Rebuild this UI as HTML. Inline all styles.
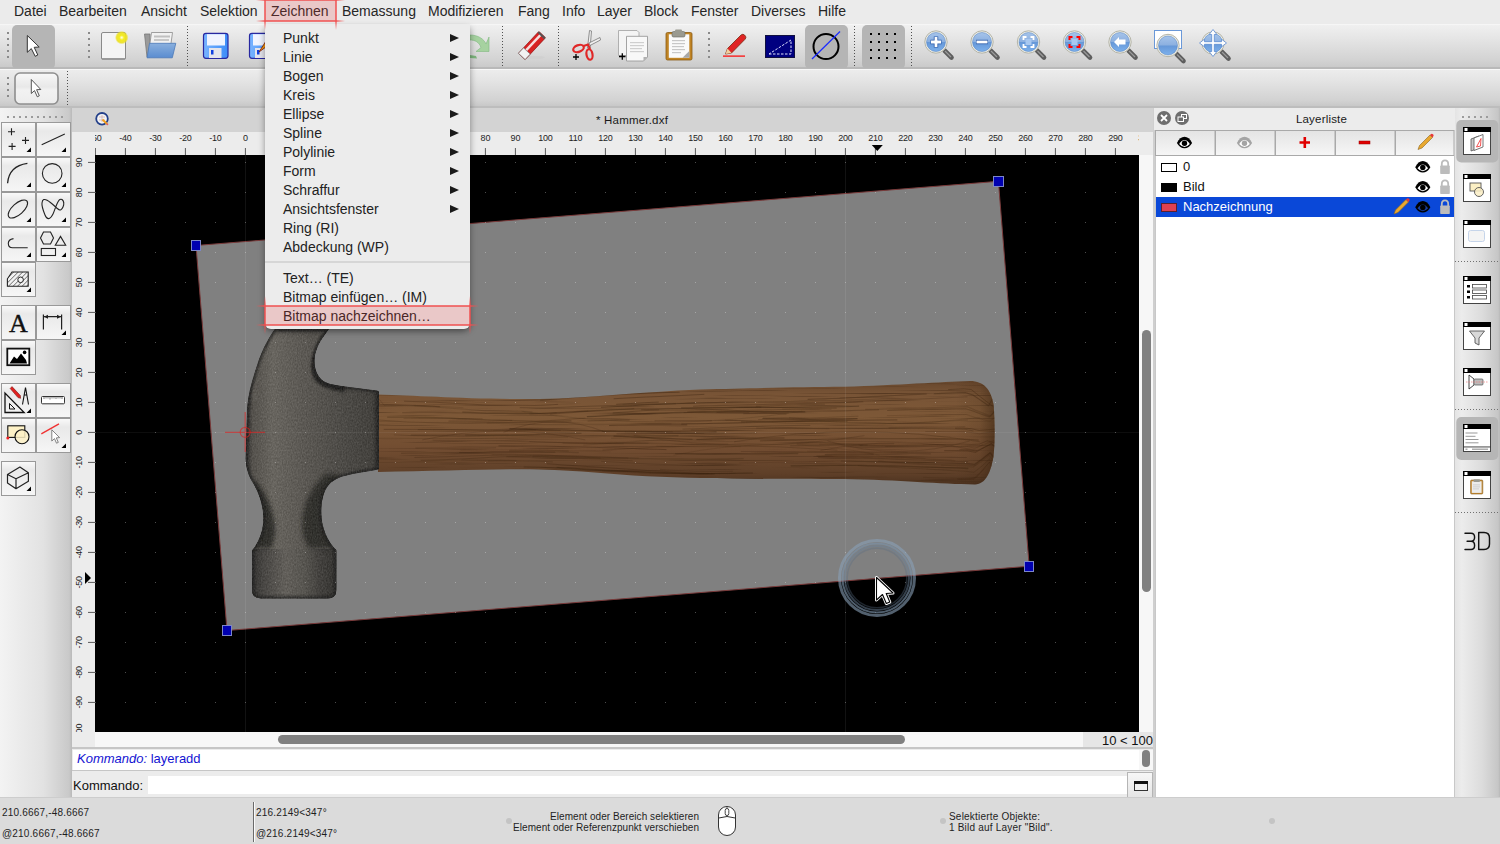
<!DOCTYPE html>
<html><head><meta charset="utf-8">
<style>
*{box-sizing:border-box}
html,body{margin:0;padding:0}
body{width:1500px;height:844px;position:relative;overflow:hidden;background:#ececec;font-family:"Liberation Sans",sans-serif;color:#222}
.a{position:absolute}
.mb{left:0;top:0;width:1500px;height:24px;background:#ebebeb}
.mi{position:absolute;top:2px;font-size:14px;line-height:18px;color:#262626;white-space:nowrap}
.tb1{left:0;top:24px;width:1500px;height:45px;background:linear-gradient(#f0f0f0 0,#e6e6e6 30%,#d2d2d2 85%,#cacaca 100%);border-top:1px solid #f6f6f6;border-bottom:2px solid #b9b9b9}
.tb2{left:0;top:69px;width:1500px;height:39px;background:linear-gradient(#ececec 0,#e4e4e4 30%,#d2d2d2 85%,#c8c8c8 100%);border-top:1px solid #f8f8f8;border-bottom:2px solid #bdbdbd}
.vdots{position:absolute;width:2px;background-image:linear-gradient(#6a6a6a 50%,transparent 50%);background-size:2px 4px}
.vdots2{position:absolute;width:1px;background-image:linear-gradient(#555 50%,transparent 50%);background-size:1px 3px}
.hdots{position:absolute;height:2px;background-image:linear-gradient(90deg,#9a9a9a 50%,transparent 50%);background-size:6px 2px}
.lp{left:0;top:108px;width:72px;height:690px;background:linear-gradient(90deg,#f3f3f3 0,#e2e2e2 60%,#c9c9c9 96%,#b9b9b9 100%)}
.tbtn{position:absolute;width:35px;height:35px;border:1px solid #9d9d9d;background:linear-gradient(#fbfbfb,#e9e9e9 45%,#f4f4f4)}
.rl{font-size:10px;color:#222;position:absolute;white-space:nowrap}
.st{position:absolute;font-size:10px;line-height:12px;letter-spacing:0.2px;color:#1e1e1e;white-space:nowrap}
.menu{left:265px;top:24px;width:205px;height:305px;background:#ececec;border-radius:0 0 6px 6px;box-shadow:2px 3px 6px -1px rgba(0,0,0,.25),-2px 3px 6px -1px rgba(0,0,0,.25)}
.it{position:absolute;left:18px;font-size:14px;line-height:18px;color:#222;white-space:nowrap}
.arr{position:absolute;left:185px;width:0;height:0;border-left:9px solid #1a1a1a;border-top:4.5px solid transparent;border-bottom:4.5px solid transparent}
.sb{position:absolute;left:1463px;width:28px;height:28px;background:#fff;border:1px solid #555;border-top:5px solid #000}
.sb:before{content:"";position:absolute;left:1px;top:-4px;width:4px;height:3px;background:#fff}
</style></head><body>

<!-- MENU BAR -->
<div class="a mb">
<span class="mi" style="left:14px">Datei</span>
<span class="mi" style="left:59px">Bearbeiten</span>
<span class="mi" style="left:141px">Ansicht</span>
<span class="mi" style="left:200px">Selektion</span>
<span class="mi" style="left:271px">Zeichnen</span>
<span class="mi" style="left:342px">Bemassung</span>
<span class="mi" style="left:428px">Modifizieren</span>
<span class="mi" style="left:518px">Fang</span>
<span class="mi" style="left:562px">Info</span>
<span class="mi" style="left:597px">Layer</span>
<span class="mi" style="left:644px">Block</span>
<span class="mi" style="left:691px">Fenster</span>
<span class="mi" style="left:751px">Diverses</span>
<span class="mi" style="left:818px">Hilfe</span>
</div>

<!-- TOOLBAR 1 -->
<div class="a tb1"></div>
<div class="a tb2"></div>
<!-- TOOLBAR1 ICONS -->
<svg class="a" style="left:0;top:24px" width="1500" height="44" viewBox="0 24 1500 44">
<defs>
<pattern id="vd" x="0" y="26" width="1" height="3" patternUnits="userSpaceOnUse"><rect width="1" height="1" fill="#505050"/></pattern>
<radialGradient id="glow" cx="0.5" cy="0.5" r="0.5"><stop offset="0" stop-color="#fffff0"/><stop offset="0.35" stop-color="#f4ec20"/><stop offset="0.75" stop-color="#ece020" stop-opacity="0.9"/><stop offset="1" stop-color="#ece020" stop-opacity="0"/></radialGradient>
<linearGradient id="blueF" x1="0" y1="0" x2="0" y2="1"><stop offset="0" stop-color="#8ab0de"/><stop offset="1" stop-color="#5a8cd0"/></linearGradient>
<linearGradient id="flop" x1="0" y1="0" x2="1" y2="0"><stop offset="0" stop-color="#78b4ff"/><stop offset="1" stop-color="#3c8cf8"/></linearGradient>
<linearGradient id="lens" x1="0" y1="0" x2="0" y2="1"><stop offset="0" stop-color="#a6c4ea"/><stop offset="0.48" stop-color="#8cb0e0"/><stop offset="0.52" stop-color="#6698d8"/><stop offset="1" stop-color="#7cb0ec"/></linearGradient>
<g id="zh"><path d="M8.5 8.5 L15.5 15.5" stroke="#5e5e5e" stroke-width="4.6" stroke-linecap="round"/><path d="M9 9 L15 15" stroke="#9a9a9a" stroke-width="1.2"/><circle cx="0" cy="0" r="11.2" fill="#eeeee6" stroke="#b4b4a8" stroke-width="1"/><circle cx="0" cy="0" r="9.5" fill="url(#lens)" stroke="#4f7fc0" stroke-width="0.5"/></g>
</defs>
<!-- handles -->
<g fill="#8a8a8a">
<rect x="7" y="32" width="2" height="2"/><rect x="7" y="38" width="2" height="2"/><rect x="7" y="44" width="2" height="2"/><rect x="7" y="50" width="2" height="2"/><rect x="7" y="56" width="2" height="2"/>
<rect x="88" y="32" width="2" height="2"/><rect x="88" y="38" width="2" height="2"/><rect x="88" y="44" width="2" height="2"/><rect x="88" y="50" width="2" height="2"/><rect x="88" y="56" width="2" height="2"/>
<rect x="708" y="32" width="2" height="2"/><rect x="708" y="38" width="2" height="2"/><rect x="708" y="44" width="2" height="2"/><rect x="708" y="50" width="2" height="2"/><rect x="708" y="56" width="2" height="2"/>
</g>

<rect x="187" y="26" width="1" height="41" fill="url(#vd)"/>
<rect x="502" y="26" width="1" height="41" fill="url(#vd)"/>
<rect x="558" y="26" width="1" height="41" fill="url(#vd)"/>
<rect x="854" y="26" width="1" height="41" fill="url(#vd)"/>
<rect x="911" y="26" width="1" height="41" fill="url(#vd)"/>
<!-- select button -->
<rect x="12" y="25" width="43" height="44" rx="5" fill="#b5b5b5"/>
<path d="M27.3 35.5 L27.3 52.3 L31.3 48.6 L35.2 56.3 L37.8 55 L34.2 47.3 L39.2 47 Z" fill="#fff" stroke="#333" stroke-width="1" stroke-linejoin="round"/>
<!-- new doc -->
<rect x="101.5" y="32.5" width="24" height="27" rx="1.5" fill="#f4f4f4" stroke="#8a8a8a" stroke-width="1"/>
<rect x="102" y="58" width="23" height="2" fill="#9a9a9a"/>
<circle cx="121.7" cy="37.6" r="6.8" fill="url(#glow)"/>
<!-- open folder -->
<path d="M144.5 34 L150 34 L150 57 L147 57 Z" fill="#9a9a9a" stroke="#777" stroke-width="0.8"/>
<path d="M151.5 32.5 L172.5 32.5 L171 43.5 L149 50 Z" fill="#f2f2f2" stroke="#8a8a8a" stroke-width="0.8"/>
<rect x="154" y="35.5" width="16" height="2" fill="#c0c0c0"/><rect x="154" y="39" width="15" height="2" fill="#c8c8c8"/>
<path d="M149.5 43.3 L175.8 43.3 L172.3 57.8 L147 57.8 Z" fill="url(#blueF)" stroke="#4a78b8" stroke-width="0.8" stroke-linejoin="round"/>
<!-- floppy -->
<rect x="203.5" y="33.3" width="24.5" height="25" rx="2.5" fill="url(#flop)" stroke="#2828a0" stroke-width="1.2"/>
<rect x="207" y="34.2" width="18" height="11.3" fill="#f0f4ff"/>
<rect x="209" y="48" width="12.5" height="10" fill="#e4e4ec"/>
<rect x="211" y="50" width="2.5" height="4.5" fill="#1040e0"/>
<!-- save as (partial) -->
<rect x="249.5" y="33.3" width="24.5" height="25" rx="2.5" fill="url(#flop)" stroke="#2828a0" stroke-width="1.2"/>
<rect x="253" y="34.2" width="18" height="11.3" fill="#f0f4ff"/>
<rect x="255" y="48" width="12.5" height="10" fill="#e4e4ec"/>
<rect x="257" y="50" width="2.5" height="4.5" fill="#1040e0"/>
<path d="M259 52 L266 41 L270 44 Z" fill="#f79a10" stroke="#7a1a10" stroke-width="0.8"/>
<!-- redo partial -->
<path d="M470 35 C478 35 484 39 486 44 L489 37 L489 51.5 L476 51.5 L481 47.5 C479 42 475 40 470 40 Z" fill="#a6d2a0" stroke="#80b880" stroke-width="0.6"/>
<path d="M470 55 L476 56 L477 58.5 L470 58 Z" fill="#7cb47c"/>
<!-- eraser -->
<ellipse cx="533" cy="57.5" rx="12" ry="1.6" fill="#d0d0d0"/>
<g transform="translate(532 45.5) rotate(-47)">
<rect x="-15" y="-4.6" width="30" height="9.2" rx="1" fill="#d82222" stroke="#8a1414" stroke-width="0.6"/>
<rect x="-8" y="-2.2" width="22" height="2.4" fill="#f6dede"/>
<rect x="-15" y="-4.6" width="7.5" height="9.2" fill="#f2f2f2" stroke="#777" stroke-width="0.7"/>
<rect x="13" y="-4.6" width="2" height="9.2" fill="#555"/>
</g>
<!-- scissors -->
<path d="M589.5 30.5 L591.5 31 L590 49 L587.5 48 Z" fill="#f0f0f0" stroke="#777" stroke-width="0.8"/>
<path d="M600 37.5 L600.5 40 L590 45.5 L589 43 Z" fill="#f0f0f0" stroke="#777" stroke-width="0.8"/>
<ellipse cx="578.5" cy="48.5" rx="5.5" ry="3.3" transform="rotate(-20 578.5 48.5)" fill="none" stroke="#e02828" stroke-width="2.2"/>
<ellipse cx="589.5" cy="54.5" rx="3" ry="5.3" transform="rotate(-10 589.5 54.5)" fill="none" stroke="#e02828" stroke-width="2.2"/>
<path d="M583.5 46 L588 44.5 L590 49" stroke="#e02828" stroke-width="2" fill="none"/>
<path d="M573 57 L579 57 M576 54 L576 60" stroke="#000" stroke-width="1.3"/>
<!-- copy -->
<path d="M618.5 30.5 L637 30.5 L639 32.5 L639 55.5 L618.5 55.5 Z" fill="#f4f4f4" stroke="#a8a8a8" stroke-width="0.9"/>
<path d="M626.5 36.3 L647.5 36.3 L647.5 57 L643.5 61 L626.5 61 Z" fill="#f8f8f8" stroke="#9a9a9a" stroke-width="0.9"/>
<path d="M643.5 61 L643.5 57 L647.5 57 Z" fill="#b0b0b0"/>
<g fill="#cfcfcf"><rect x="630" y="42" width="14" height="1.2"/><rect x="630" y="45" width="14" height="1.2"/><rect x="630" y="48" width="12" height="1.2"/><rect x="630" y="51" width="14" height="1.2"/></g>
<path d="M619 56.5 L625.5 56.5 M622.3 53.3 L622.3 59.8" stroke="#000" stroke-width="1.3"/>
<!-- paste -->
<rect x="666" y="32.5" width="26" height="27.5" rx="1.5" fill="#c08424" stroke="#8a5c14" stroke-width="0.8"/>
<rect x="668.8" y="34.3" width="20.5" height="23.5" fill="#fafafa"/>
<path d="M682.5 57.8 L689.3 51 L689.3 57.8 Z" fill="#a8a8a8"/>
<rect x="672" y="31.5" width="13" height="5.5" rx="1.5" fill="#9a9a90" stroke="#6a6a62" stroke-width="0.6"/>
<rect x="675" y="29.5" width="7" height="3" rx="1" fill="#9a9a90"/>
<g fill="#c8c8c8"><rect x="672" y="40" width="13" height="1.2"/><rect x="672" y="43" width="13" height="1.2"/><rect x="672" y="46" width="12" height="1.2"/><rect x="672" y="49" width="13" height="1.2"/><rect x="672" y="52" width="9" height="1.2"/></g>
<!-- red pencil -->
<path d="M725.5 54 L727.5 48.5 L741 35 Q743 33.5 744.5 35 L745.5 36.2 Q746.5 37.8 745 39.3 L731.5 53 Z" fill="#e02424" stroke="#7a2a10" stroke-width="0.8"/>
<path d="M725.5 54 L727.5 48.5 L731.5 53 Z" fill="#f0d0a0"/>
<rect x="723" y="55.5" width="22" height="1.2" fill="#f00"/>
<!-- navy -->
<rect x="765.5" y="35.5" width="29" height="22" fill="#000080" stroke="#101040" stroke-width="1"/>
<path d="M769 54 L791 54 L791 40 Z" fill="none" stroke="#dfe2ff" stroke-width="1" stroke-dasharray="2.5 1.5"/>
<!-- circle button -->
<rect x="805" y="25" width="43" height="44" rx="5" fill="#b5b5b5"/>
<circle cx="826" cy="46.5" r="12.5" fill="none" stroke="#000" stroke-width="2"/>
<path d="M812 59 L840 31.5" stroke="#1a2aff" stroke-width="1.2"/>
<!-- grid button -->
<rect x="862" y="25" width="43" height="44" rx="5" fill="#b5b5b5"/>
<g fill="#000">
<rect x="870" y="33" width="2" height="2"/><rect x="878" y="33" width="2" height="2"/><rect x="886" y="33" width="2" height="2"/><rect x="894" y="33" width="2" height="2"/>
<rect x="870" y="41" width="2" height="2"/><rect x="878" y="41" width="2" height="2"/><rect x="886" y="41" width="2" height="2"/><rect x="894" y="41" width="2" height="2"/>
<rect x="870" y="49" width="2" height="2"/><rect x="878" y="49" width="2" height="2"/><rect x="886" y="49" width="2" height="2"/><rect x="894" y="49" width="2" height="2"/>
<rect x="870" y="57" width="2" height="2"/><rect x="878" y="57" width="2" height="2"/><rect x="886" y="57" width="2" height="2"/><rect x="894" y="57" width="2" height="2"/>
</g>
<!-- zooms -->
<g transform="translate(936 42)"><use href="#zh"/><path d="M-5.5 0 L5.5 0 M0 -5.5 L0 5.5" stroke="#2a5aa8" stroke-width="4.4"/><path d="M-5 0 L5 0 M0 -5 L0 5" stroke="#fff" stroke-width="2.8"/></g>
<g transform="translate(982 42)"><use href="#zh"/><path d="M-6 0 L6 0" stroke="#2a5aa8" stroke-width="4.4"/><path d="M-5.5 0 L5.5 0" stroke="#fff" stroke-width="2.8"/></g>
<g transform="translate(1028.5 42)"><use href="#zh"/><rect x="-3" y="-3" width="6" height="6" fill="#a8c8f0"/><path d="M-5 -2 L-5 -5 L-2 -5 M2 -5 L5 -5 L5 -2 M5 2 L5 5 L2 5 M-2 5 L-5 5 L-5 2" stroke="#fff" stroke-width="1.8" fill="none"/></g>
<g transform="translate(1074.5 42)"><use href="#zh"/><rect x="-3" y="-3" width="6" height="6" fill="#a8c8f0"/><path d="M-5 -2 L-5 -5 L-2 -5 M2 -5 L5 -5 L5 -2 M5 2 L5 5 L2 5 M-2 5 L-5 5 L-5 2" stroke="#f00" stroke-width="2" fill="none"/></g>
<g transform="translate(1120 42)"><use href="#zh"/><path d="M-6 0 L-1 -5 L-1 -2.5 L5.5 -2.5 L5.5 2.5 L-1 2.5 L-1 5 Z" fill="#fff"/></g>
<rect x="1154.5" y="30.5" width="27" height="18" fill="#fff" stroke="#6a98d8" stroke-width="1"/>
<g transform="translate(1168 45.5)"><use href="#zh"/></g>
<g transform="translate(1213 43)"><use href="#zh"/><path d="M0 -13.5 L-3.8 -8.5 L-1.3 -8.5 L-1.3 -1.3 L-8.5 -1.3 L-8.5 -3.8 L-13.5 0 L-8.5 3.8 L-8.5 1.3 L-1.3 1.3 L-1.3 8.5 L-3.8 8.5 L0 13.5 L3.8 8.5 L1.3 8.5 L1.3 1.3 L8.5 1.3 L8.5 3.8 L13.5 0 L8.5 -3.8 L8.5 -1.3 L1.3 -1.3 L1.3 -8.5 L3.8 -8.5 Z" fill="#fff" stroke="#5a8ad0" stroke-width="0.8" stroke-linejoin="round"/></g>
</svg>

<!-- LEFT PANEL -->
<div class="a lp"></div>
<!-- LEFT PANEL ICONS -->
<svg class="a" style="left:0;top:108px" width="72" height="690" viewBox="0 108 72 690">
<defs>
<linearGradient id="btng" x1="0" y1="0" x2="0" y2="1"><stop offset="0" stop-color="#fafafa"/><stop offset="0.25" stop-color="#e9e9e9"/><stop offset="0.55" stop-color="#eeeeee"/><stop offset="1" stop-color="#f6f6f6"/></linearGradient>
<pattern id="hatch" width="3.2" height="3.2" patternUnits="userSpaceOnUse" patternTransform="rotate(45)"><rect width="3.2" height="3.2" fill="#f2f2f2"/><rect width="0.8" height="3.2" fill="#777"/></pattern>
</defs>
<g fill="#9a9a9a">
<rect x="7" y="116" width="2" height="2"/><rect x="13" y="116" width="2" height="2"/><rect x="19" y="116" width="2" height="2"/><rect x="25" y="116" width="2" height="2"/><rect x="31" y="116" width="2" height="2"/><rect x="37" y="116" width="2" height="2"/><rect x="43" y="116" width="2" height="2"/><rect x="49" y="116" width="2" height="2"/><rect x="55" y="116" width="2" height="2"/><rect x="61" y="116" width="2" height="2"/>
</g>
<g fill="url(#btng)" stroke="#999" stroke-width="1">
<rect x="1.5" y="122.5" width="34" height="34"/><rect x="36.5" y="122.5" width="34" height="34"/>
<rect x="1.5" y="157.5" width="34" height="34"/><rect x="36.5" y="157.5" width="34" height="34"/>
<rect x="1.5" y="192.5" width="34" height="34"/><rect x="36.5" y="192.5" width="34" height="34"/>
<rect x="1.5" y="227.5" width="34" height="34"/><rect x="36.5" y="227.5" width="34" height="34"/>
<rect x="1.5" y="262.5" width="34" height="34"/>
<rect x="1.5" y="305.5" width="34" height="34"/><rect x="36.5" y="305.5" width="34" height="34"/>
<rect x="1.5" y="340.5" width="34" height="34"/>
<rect x="1.5" y="383.5" width="34" height="34"/><rect x="36.5" y="383.5" width="34" height="34"/>
<rect x="1.5" y="418.5" width="34" height="34"/><rect x="36.5" y="418.5" width="34" height="34"/>
<rect x="1.5" y="461.5" width="34" height="34"/>
</g>
<!-- corner triangles -->
<g fill="#000">
<path d="M26.5 152 L31 147.5 L31 152 Z"/><path d="M61.5 152 L66 147.5 L66 152 Z"/>
<path d="M26.5 187 L31 182.5 L31 187 Z"/><path d="M61.5 187 L66 182.5 L66 187 Z"/>
<path d="M26.5 222 L31 217.5 L31 222 Z"/><path d="M61.5 222 L66 217.5 L66 222 Z"/>
<path d="M26.5 257 L31 252.5 L31 257 Z"/><path d="M61.5 257 L66 252.5 L66 257 Z"/>
<path d="M26.5 292 L31 287.5 L31 292 Z"/>
<path d="M61.5 335 L66 330.5 L66 335 Z"/>
<path d="M26.5 413 L31 408.5 L31 413 Z"/>
<path d="M61.5 448 L66 443.5 L66 448 Z"/>
<path d="M26.5 491 L31 486.5 L31 491 Z"/>
</g>
<g fill="none" stroke="#222" stroke-width="1.1">
<!-- points -->
<path d="M8 131.7 L15 131.7 M11.5 128.2 L11.5 135.2"/>
<path d="M22 140.4 L29 140.4 M25.5 136.9 L25.5 143.9"/>
<path d="M8.6 146.4 L15.6 146.4 M12.1 142.9 L12.1 149.9"/>
<!-- line -->
<path d="M41.7 144.7 L64.8 133.9"/>
<!-- arc -->
<path d="M7.6 183.2 Q9 166 27.4 163.4" stroke-width="1.3"/>
<!-- circle -->
<circle cx="52.2" cy="173.4" r="9.8"/>
<!-- ellipse -->
<ellipse cx="17.9" cy="209" rx="12" ry="5.6" transform="rotate(-42 17.9 209)"/>
<!-- spline -->
<path d="M42 203 C43 193 55 207 58 209 C62 213 66 203 62 199.5 C58 197 55 210 53 214 C50 220 47 220 45 215 C43 210 41.5 206 42 203 Z" />
<!-- polyline -->
<path d="M13.5 238.6 Q8.2 239.5 8.3 243.5 Q8.5 247.8 12.5 247.8 L27.7 247.8"/>
<!-- shapes -->
<path d="M43.5 232 L50.5 232 L53.5 238 L50.5 244 L43.5 244 L40.5 238 Z"/>
<path d="M55.3 245.2 L65.7 245.2 L60.5 236.4 Z"/>
<rect x="41.3" y="248.5" width="14.2" height="7"/>
</g>
<!-- hatch -->
<path d="M7.4 286.2 L7.4 278.8 L12 272 L28.2 272 L28.2 286.2 Z" fill="url(#hatch)" stroke="#222" stroke-width="1.1"/>
<circle cx="20.6" cy="279.8" r="2.8" fill="#f4f4f4" stroke="#222" stroke-width="1"/>
<!-- A -->
<text x="18.3" y="332" font-family="Liberation Serif" font-size="26" text-anchor="middle" fill="#111" stroke="#111" stroke-width="0.4">A</text>
<!-- dimension -->
<g stroke="#222" stroke-width="1.2" fill="none"><path d="M43.4 314.6 L43.4 329.6 M61.6 314.6 L61.6 329.6 M44 316.7 L61 316.7"/></g>
<path d="M44 316.7 L48 314.7 L48 318.7 Z M61 316.7 L57 314.7 L57 318.7 Z" fill="#222"/>
<!-- image -->
<rect x="7.3" y="348.6" width="22" height="16.6" fill="#fff" stroke="#111" stroke-width="1.8"/>
<path d="M9.5 363.5 L14 356.5 L17 359 L21 353.5 L26 360 L27 363.5 Z" fill="#000"/>
<circle cx="24.6" cy="352.4" r="1.8" fill="#000"/>
<!-- triangle/pencil/compass -->
<path d="M5 393 L5 412.5 L24.2 412.5 Z" fill="none" stroke="#111" stroke-width="1.3"/>
<path d="M9.5 403.5 L9.5 409 L15 409 Z" fill="none" stroke="#111" stroke-width="1"/>
<path d="M10.2 388.5 L12 386.6 L20.3 395.5 L20.6 398.3 L18 397.6 Z" fill="#e02020" stroke="#7a1a10" stroke-width="0.6"/>
<path d="M25.5 387.5 L22.5 404.5 M25.5 387.5 L28.5 404.5 M24.5 395 L26.5 395" stroke="#111" stroke-width="1.1" fill="none"/>
<!-- ruler -->
<rect x="41.5" y="396.5" width="23" height="7.3" rx="1" fill="#fff" stroke="#333" stroke-width="1"/>
<path d="M44 397 L44 399 M46 397 L46 398.5 M48 397 L48 398.5 M50 397 L50 399.5 M52 397 L52 398.5 M54 397 L54 398.5 M56 397 L56 399 M58 397 L58 398.5 M60 397 L60 398.5 M62 397 L62 399" stroke="#444" stroke-width="0.7"/>
<!-- rect circle -->
<rect x="7.8" y="425.8" width="17" height="11.6" fill="#fdf1c6" stroke="#111" stroke-width="1.1"/>
<circle cx="22" cy="436.7" r="7" fill="#fdf1c6" fill-opacity="0.85" stroke="#111" stroke-width="1.1"/>
<circle cx="7.8" cy="438" r="1.5" fill="#f02020"/>
<!-- red line cursor -->
<path d="M41.3 433.9 L59 423.9" stroke="#f03030" stroke-width="1.3"/>
<path d="M51.8 429.8 L51.8 441 L54.5 438.6 L56.5 443.2 L58.3 442.4 L56.3 437.9 L59.6 437.6 Z" fill="#fff" stroke="#666" stroke-width="0.8" stroke-linejoin="round"/>
<!-- cube -->
<path d="M19.9 467 L7.5 474.5 L16 478.8 L28.4 472.7 Z M7.5 474.5 L7.5 483 L16 488.7 L28.4 481.3 L28.4 472.7 M16 478.8 L16 488.7" fill="none" stroke="#222" stroke-width="1.2" stroke-linejoin="round"/>
</svg>

<!-- DOC TITLE -->
<div class="a" style="left:72px;top:108px;width:1081px;height:24px;background:#d3d3d3"></div>
<div class="a" style="left:596px;top:112px;font-size:11.5px;line-height:16px;letter-spacing:0.2px;color:#1a1a1a">* Hammer.dxf</div>
<!-- RULERS -->
<svg class="a" style="left:72px;top:132px" width="1081" height="23" viewBox="72 132 1081 23">
<defs><clipPath id="hclip"><rect x="95" y="132" width="1044" height="23"/></clipPath></defs>
<rect x="72" y="132" width="1081" height="23" fill="#ececec"/>
<g clip-path="url(#hclip)" fill="#1e1e1e" font-family="Liberation Sans" font-size="9" text-anchor="middle" letter-spacing="-0.2">
<text x="95.4" y="141">-50</text>
<rect x="94.9" y="148" width="1" height="7" fill="#5a5a5a"/>
<text x="125.4" y="141">-40</text>
<rect x="124.9" y="148" width="1" height="7" fill="#5a5a5a"/>
<text x="155.4" y="141">-30</text>
<rect x="154.9" y="148" width="1" height="7" fill="#5a5a5a"/>
<text x="185.4" y="141">-20</text>
<rect x="184.9" y="148" width="1" height="7" fill="#5a5a5a"/>
<text x="215.4" y="141">-10</text>
<rect x="214.9" y="148" width="1" height="7" fill="#5a5a5a"/>
<text x="245.4" y="141">0</text>
<rect x="244.9" y="148" width="1" height="7" fill="#5a5a5a"/>
<text x="275.4" y="141">10</text>
<rect x="274.9" y="148" width="1" height="7" fill="#5a5a5a"/>
<text x="305.4" y="141">20</text>
<rect x="304.9" y="148" width="1" height="7" fill="#5a5a5a"/>
<text x="335.4" y="141">30</text>
<rect x="334.9" y="148" width="1" height="7" fill="#5a5a5a"/>
<text x="365.4" y="141">40</text>
<rect x="364.9" y="148" width="1" height="7" fill="#5a5a5a"/>
<text x="395.4" y="141">50</text>
<rect x="394.9" y="148" width="1" height="7" fill="#5a5a5a"/>
<text x="425.4" y="141">60</text>
<rect x="424.9" y="148" width="1" height="7" fill="#5a5a5a"/>
<text x="455.4" y="141">70</text>
<rect x="454.9" y="148" width="1" height="7" fill="#5a5a5a"/>
<text x="485.4" y="141">80</text>
<rect x="484.9" y="148" width="1" height="7" fill="#5a5a5a"/>
<text x="515.4" y="141">90</text>
<rect x="514.9" y="148" width="1" height="7" fill="#5a5a5a"/>
<text x="545.4" y="141">100</text>
<rect x="544.9" y="148" width="1" height="7" fill="#5a5a5a"/>
<text x="575.4" y="141">110</text>
<rect x="574.9" y="148" width="1" height="7" fill="#5a5a5a"/>
<text x="605.4" y="141">120</text>
<rect x="604.9" y="148" width="1" height="7" fill="#5a5a5a"/>
<text x="635.4" y="141">130</text>
<rect x="634.9" y="148" width="1" height="7" fill="#5a5a5a"/>
<text x="665.4" y="141">140</text>
<rect x="664.9" y="148" width="1" height="7" fill="#5a5a5a"/>
<text x="695.4" y="141">150</text>
<rect x="694.9" y="148" width="1" height="7" fill="#5a5a5a"/>
<text x="725.4" y="141">160</text>
<rect x="724.9" y="148" width="1" height="7" fill="#5a5a5a"/>
<text x="755.4" y="141">170</text>
<rect x="754.9" y="148" width="1" height="7" fill="#5a5a5a"/>
<text x="785.4" y="141">180</text>
<rect x="784.9" y="148" width="1" height="7" fill="#5a5a5a"/>
<text x="815.4" y="141">190</text>
<rect x="814.9" y="148" width="1" height="7" fill="#5a5a5a"/>
<text x="845.4" y="141">200</text>
<rect x="844.9" y="148" width="1" height="7" fill="#5a5a5a"/>
<text x="875.4" y="141">210</text>
<rect x="874.9" y="148" width="1" height="7" fill="#5a5a5a"/>
<text x="905.4" y="141">220</text>
<rect x="904.9" y="148" width="1" height="7" fill="#5a5a5a"/>
<text x="935.4" y="141">230</text>
<rect x="934.9" y="148" width="1" height="7" fill="#5a5a5a"/>
<text x="965.4" y="141">240</text>
<rect x="964.9" y="148" width="1" height="7" fill="#5a5a5a"/>
<text x="995.4" y="141">250</text>
<rect x="994.9" y="148" width="1" height="7" fill="#5a5a5a"/>
<text x="1025.4" y="141">260</text>
<rect x="1024.9" y="148" width="1" height="7" fill="#5a5a5a"/>
<text x="1055.4" y="141">270</text>
<rect x="1054.9" y="148" width="1" height="7" fill="#5a5a5a"/>
<text x="1085.4" y="141">280</text>
<rect x="1084.9" y="148" width="1" height="7" fill="#5a5a5a"/>
<text x="1115.4" y="141">290</text>
<rect x="1114.9" y="148" width="1" height="7" fill="#5a5a5a"/>
<text x="1145.4" y="141">300</text>
<rect x="1144.9" y="148" width="1" height="7" fill="#5a5a5a"/>
</g>
<path d="M871.8 145 L882.8 145 L877.3 151 Z" fill="#000"/>
</svg>
<svg class="a" style="left:72px;top:155px" width="23" height="577" viewBox="72 155 23 577">
<rect x="72" y="155" width="23" height="577" fill="#ececec"/>
<g fill="#1e1e1e" font-family="Liberation Sans" font-size="9" text-anchor="middle" letter-spacing="-0.2">
<text transform="translate(81.5 162.4) rotate(-90)" x="0" y="0">90</text>
<rect x="88" y="161.9" width="7" height="1" fill="#5a5a5a"/>
<text transform="translate(81.5 192.4) rotate(-90)" x="0" y="0">80</text>
<rect x="88" y="191.9" width="7" height="1" fill="#5a5a5a"/>
<text transform="translate(81.5 222.4) rotate(-90)" x="0" y="0">70</text>
<rect x="88" y="221.9" width="7" height="1" fill="#5a5a5a"/>
<text transform="translate(81.5 252.4) rotate(-90)" x="0" y="0">60</text>
<rect x="88" y="251.9" width="7" height="1" fill="#5a5a5a"/>
<text transform="translate(81.5 282.4) rotate(-90)" x="0" y="0">50</text>
<rect x="88" y="281.9" width="7" height="1" fill="#5a5a5a"/>
<text transform="translate(81.5 312.4) rotate(-90)" x="0" y="0">40</text>
<rect x="88" y="311.9" width="7" height="1" fill="#5a5a5a"/>
<text transform="translate(81.5 342.4) rotate(-90)" x="0" y="0">30</text>
<rect x="88" y="341.9" width="7" height="1" fill="#5a5a5a"/>
<text transform="translate(81.5 372.4) rotate(-90)" x="0" y="0">20</text>
<rect x="88" y="371.9" width="7" height="1" fill="#5a5a5a"/>
<text transform="translate(81.5 402.4) rotate(-90)" x="0" y="0">10</text>
<rect x="88" y="401.9" width="7" height="1" fill="#5a5a5a"/>
<text transform="translate(81.5 432.4) rotate(-90)" x="0" y="0">0</text>
<rect x="88" y="431.9" width="7" height="1" fill="#5a5a5a"/>
<text transform="translate(81.5 462.4) rotate(-90)" x="0" y="0">-10</text>
<rect x="88" y="461.9" width="7" height="1" fill="#5a5a5a"/>
<text transform="translate(81.5 492.4) rotate(-90)" x="0" y="0">-20</text>
<rect x="88" y="491.9" width="7" height="1" fill="#5a5a5a"/>
<text transform="translate(81.5 522.4) rotate(-90)" x="0" y="0">-30</text>
<rect x="88" y="521.9" width="7" height="1" fill="#5a5a5a"/>
<text transform="translate(81.5 552.4) rotate(-90)" x="0" y="0">-40</text>
<rect x="88" y="551.9" width="7" height="1" fill="#5a5a5a"/>
<text transform="translate(81.5 582.4) rotate(-90)" x="0" y="0">-50</text>
<rect x="88" y="581.9" width="7" height="1" fill="#5a5a5a"/>
<text transform="translate(81.5 612.4) rotate(-90)" x="0" y="0">-60</text>
<rect x="88" y="611.9" width="7" height="1" fill="#5a5a5a"/>
<text transform="translate(81.5 642.4) rotate(-90)" x="0" y="0">-70</text>
<rect x="88" y="641.9" width="7" height="1" fill="#5a5a5a"/>
<text transform="translate(81.5 672.4) rotate(-90)" x="0" y="0">-80</text>
<rect x="88" y="671.9" width="7" height="1" fill="#5a5a5a"/>
<text transform="translate(81.5 702.4) rotate(-90)" x="0" y="0">-90</text>
<rect x="88" y="701.9" width="7" height="1" fill="#5a5a5a"/>
<text transform="translate(81.5 732.4) rotate(-90)" x="0" y="0">-100</text>

</g>
<path d="M85 572 L85 584 L91 578 Z" fill="#000"/>
</svg>

<!-- CANVAS -->
<svg class="a" style="left:95px;top:155px" width="1044" height="577" viewBox="95 155 1044 577">
<defs>
<pattern id="dots" x="245" y="432" width="30" height="30" patternUnits="userSpaceOnUse"><rect x="0" y="0" width="1" height="1" fill="#fff"/></pattern>
<linearGradient id="wood" x1="0" y1="0" x2="0" y2="1">
<stop offset="0" stop-color="#66462c"/><stop offset="0.12" stop-color="#785436"/><stop offset="0.35" stop-color="#7d5837"/><stop offset="0.65" stop-color="#724d31"/><stop offset="0.9" stop-color="#5e3f28"/><stop offset="1" stop-color="#4c321f"/>
</linearGradient>
<filter id="grain" x="0" y="0" width="1" height="1" color-interpolation-filters="sRGB">
<feTurbulence type="fractalNoise" baseFrequency="0.012 0.6" numOctaves="2" seed="11" result="n"/>
<feColorMatrix in="n" type="matrix" values="0 0 0 0 0.22  0 0 0 0 0.13  0 0 0 0 0.06  -1.6 0 0 0 0.7" result="g"/>
<feComposite in="g" in2="SourceGraphic" operator="in" result="gc"/>
<feMerge><feMergeNode in="SourceGraphic"/><feMergeNode in="gc"/></feMerge>
</filter>
<filter id="noise" x="0" y="0" width="1" height="1" color-interpolation-filters="sRGB">
<feTurbulence type="fractalNoise" baseFrequency="0.8 0.5" numOctaves="2" seed="2" result="n"/>
<feColorMatrix in="n" type="matrix" values="1 0 0 0 0  1 0 0 0 0  1 0 0 0 0  0 0 0 0 1" result="g"/>
<feComposite in="g" in2="SourceGraphic" operator="arithmetic" k1="0" k2="0.16" k3="1" k4="-0.08" result="m"/>
<feComposite in="m" in2="SourceGraphic" operator="in"/>
</filter>
<linearGradient id="woodEnd" gradientUnits="userSpaceOnUse" x1="955" y1="0" x2="996" y2="0">
<stop offset="0" stop-color="#2a1808" stop-opacity="0"/><stop offset="0.6" stop-color="#2a1808" stop-opacity="0.12"/><stop offset="1" stop-color="#2a1808" stop-opacity="0.5"/>
</linearGradient>
<linearGradient id="steel" gradientUnits="userSpaceOnUse" x1="246" y1="0" x2="380" y2="0">
<stop offset="0" stop-color="#353432"/><stop offset="0.05" stop-color="#55524d"/><stop offset="0.2" stop-color="#68655f"/><stop offset="0.42" stop-color="#5c5954"/><stop offset="0.75" stop-color="#4c4a46"/><stop offset="0.94" stop-color="#44423e"/><stop offset="1" stop-color="#2e2d2b"/>
</linearGradient>
<linearGradient id="face" gradientUnits="userSpaceOnUse" x1="252" y1="0" x2="337" y2="0">
<stop offset="0" stop-color="#363533"/><stop offset="0.15" stop-color="#4a4845"/><stop offset="0.4" stop-color="#625f5a"/><stop offset="0.62" stop-color="#575550"/><stop offset="0.8" stop-color="#43413e"/><stop offset="1" stop-color="#363532"/>
</linearGradient>
<radialGradient id="ring" cx="0.5" cy="0.5" r="0.5">
<stop offset="0.74" stop-color="#8aa0b8" stop-opacity="0"/><stop offset="0.8" stop-color="#6d8298" stop-opacity="0.6"/><stop offset="0.9" stop-color="#7f96ad" stop-opacity="0.9"/><stop offset="0.97" stop-color="#9ab0c6" stop-opacity="0.85"/><stop offset="1" stop-color="#9ab0c6" stop-opacity="0"/>
</radialGradient>
</defs>
<rect x="95" y="155" width="1044" height="577" fill="#000"/>
<!-- image quad -->
<path d="M196 245.5 L998.4 181.3 L1029.2 566.2 L227 630.5 Z" fill="#808080" stroke="#7a3a3a" stroke-width="1"/>
<!-- handle -->
<g filter="url(#grain)">
<path d="M378 394.5 C420 395.5 470 399.5 540 399 C590 398 640 392 700 389.5 C760 388 800 387 844 386.8 C900 385 940 382 970 381 C984 381 991 390 993.5 404 C995 420 995 445 993.5 456 C991 472 986 484 975 484.5 C940 484 900 480 844 479 C760 479 700 479 647 476.3 C610 474 580 470.5 540 469.5 C500 468.5 440 471 378 472 Z" fill="url(#wood)"/>
<path d="M378 394.5 C420 395.5 470 399.5 540 399 C590 398 640 392 700 389.5 C760 388 800 387 844 386.8 C900 385 940 382 970 381 C984 381 991 390 993.5 404 C995 420 995 445 993.5 456 C991 472 986 484 975 484.5 C940 484 900 480 844 479 C760 479 700 479 647 476.3 C610 474 580 470.5 540 469.5 C500 468.5 440 471 378 472 Z" fill="url(#woodEnd)"/>
<clipPath id="hclip2"><path d="M378 394.5 C420 395.5 470 399.5 540 399 C590 398 640 392 700 389.5 C760 388 800 387 844 386.8 C900 385 940 382 970 381 C984 381 991 390 993.5 404 C995 420 995 445 993.5 456 C991 472 986 484 975 484.5 C940 484 900 480 844 479 C760 479 700 479 647 476.3 C610 474 580 470.5 540 469.5 C500 468.5 440 471 378 472 Z"/></clipPath>
<g clip-path="url(#hclip2)" stroke="#3e2612" fill="none" stroke-linecap="round">
<path d="M743.7 413.7 L751.1 413.6 L758.5 413.5 L765.9 413.4 L773.3 413.3 L780.7 413.2 L788.2 413.1" stroke-opacity="0.47" stroke-width="0.7"/>
<path d="M613.2 412.9 L620.7 412.3 L628.3 411.8 L635.8 411.2 L643.4 410.7 L651.0 410.3 L658.5 409.9" stroke-opacity="0.39" stroke-width="1.0"/>
<path d="M492.3 454.8 L500.0 454.7 L507.6 454.8 L515.3 454.8 L523.0 454.9 L530.7 455.0 L538.4 455.0 L546.1 455.2 L553.8 455.5 L561.5 455.7 L569.1 456.0 L576.8 456.2 L584.5 456.5 L592.2 456.7 L599.9 457.0 L607.6 457.2 L615.3 457.4 L623.0 457.7 L630.6 457.9 L638.3 458.2" stroke-opacity="0.29" stroke-width="0.7"/>
<path d="M934.3 393.7 L942.1 393.4 L949.8 393.1 L957.5 392.9 L965.3 392.6 L973.0 395.0 L980.8 400.4 L988.5 405.7 L996.2 392.5 L1004.0 392.6 L1011.7 392.6 L1019.4 392.6 L1027.2 392.7 L1034.9 392.7" stroke-opacity="0.44" stroke-width="1.1"/>
<path d="M681.7 424.1 L689.7 423.9 L697.7 423.8 L705.6 423.6 L713.6 423.3 L721.6 423.1 L729.6 422.9 L737.5 422.7 L745.5 422.5 L753.5 422.3 L761.4 422.2 L769.4 422.0 L777.4 421.8 L785.3 421.6 L793.3 421.5 L801.3 421.3 L809.2 421.1 L817.2 421.0 L825.2 420.9 L833.1 420.7 L841.1 420.6 L849.1 420.5 L857.1 420.4 L865.0 420.2 L873.0 420.1 L881.0 420.0 L888.9 420.0 L896.9 419.9" stroke-opacity="0.46" stroke-width="1.0"/>
<path d="M782.7 409.1 L789.6 409.1 L796.5 409.1 L803.4 409.2 L810.3 409.2 L817.2 409.3 L824.1 409.3 L831.0 409.4" stroke-opacity="0.21" stroke-width="0.8"/>
<path d="M741.4 421.8 L749.0 421.7 L756.5 421.6 L764.1 421.5 L771.6 421.5 L779.1 421.4 L786.7 421.4 L794.2 421.3 L801.8 421.3 L809.3 421.3 L816.9 421.3 L824.4 421.3 L832.0 421.3 L839.5 421.3 L847.1 421.3" stroke-opacity="0.39" stroke-width="1.0"/>
<path d="M462.7 412.1 L470.5 412.4 L478.3 412.8 L486.0 413.1 L493.8 413.1 L501.6 413.1 L509.4 413.2 L517.2 413.3 L525.0 413.3 L532.7 413.4 L540.5 413.4 L548.3 413.0 L556.1 412.6 L563.9 412.2 L571.7 411.8 L579.4 411.4 L587.2 410.9 L595.0 410.5 L602.8 410.2 L610.6 409.9 L618.4 409.5 L626.1 409.2 L633.9 408.8" stroke-opacity="0.36" stroke-width="1.1"/>
<path d="M865.7 409.4 L873.5 409.3 L881.3 409.1 L889.1 408.9 L897.0 408.7 L904.8 408.5 L912.6 408.3 L920.4 408.1 L928.2 407.9 L936.0 407.6 L943.8 407.4 L951.6 407.2 L959.5 406.9 L967.3 406.7 L975.1 410.1 L982.9 413.1 L990.7 416.1 L998.5 406.3 L1006.3 406.2 L1014.1 406.2 L1022.0 406.1 L1029.8 406.1 L1037.6 406.0 L1045.4 405.9" stroke-opacity="0.25" stroke-width="1.3"/>
<path d="M885.8 446.5 L893.3 446.5 L900.7 446.5 L908.1 446.5 L915.6 446.5 L923.0 446.5 L930.4 446.5 L937.9 446.6 L945.3 446.6 L952.7 446.6 L960.2 446.6 L967.6 446.6 L975.0 448.3 L982.5 444.8" stroke-opacity="0.26" stroke-width="0.8"/>
<path d="M696.8 439.6 L704.8 439.4 L712.7 439.1 L720.6 438.9 L728.6 438.7 L736.5 438.5 L744.4 438.4 L752.4 438.2 L760.3 438.1 L768.2 438.1 L776.2 438.0 L784.1 438.0" stroke-opacity="0.50" stroke-width="1.0"/>
<path d="M414.5 405.3 L421.5 405.5 L428.4 405.8 L435.3 406.1 L442.2 406.5 L449.2 406.9 L456.1 407.3 L463.0 407.7" stroke-opacity="0.20" stroke-width="0.9"/>
<path d="M957.7 479.1 L965.6 479.0 L973.6 478.9 L981.5 471.4 L989.5 462.1 L997.4 476.9 L1005.4 476.4 L1013.4 476.1 L1021.3 475.8 L1029.3 475.6 L1037.2 475.5 L1045.2 475.5 L1053.1 475.6 L1061.1 475.7 L1069.0 476.0 L1077.0 476.4 L1085.0 476.8 L1092.9 477.3" stroke-opacity="0.40" stroke-width="1.0"/>
<path d="M520.1 407.7 L527.9 407.8 L535.6 408.0 L543.4 408.0 L551.2 407.7 L558.9 407.4 L566.7 407.1 L574.5 406.8 L582.2 406.5 L590.0 406.2 L597.8 406.0 L605.6 405.7 L613.3 405.5 L621.1 405.3 L628.9 405.0 L636.6 404.8 L644.4 404.5 L652.2 404.3 L659.9 404.2 L667.7 404.0 L675.5 403.8" stroke-opacity="0.46" stroke-width="0.8"/>
<path d="M660.4 469.4 L667.6 469.9 L674.8 470.3 L682.0 470.7 L689.2 471.0 L696.4 471.4 L703.6 471.5 L710.9 471.5 L718.1 471.5 L725.3 471.4 L732.5 471.3" stroke-opacity="0.37" stroke-width="0.7"/>
<path d="M817.5 456.4 L825.1 456.0 L832.7 455.7 L840.4 455.5 L848.0 455.4 L855.6 455.5 L863.2 455.6 L870.8 455.8 L878.4 456.1 L886.1 456.4 L893.7 456.8 L901.3 457.2 L908.9 457.7 L916.5 458.2 L924.1 458.7 L931.7 459.2 L939.4 459.7 L947.0 460.2 L954.6 460.6" stroke-opacity="0.19" stroke-width="1.3"/>
<path d="M887.2 415.6 L895.1 415.5 L903.0 415.4 L910.9 415.3 L918.8 415.2 L926.8 415.1 L934.7 415.0 L942.6 414.9 L950.5 414.8 L958.4 414.7 L966.3 414.5 L974.2 417.2 L982.1 419.4 L990.0 421.3 L997.9 414.5 L1005.8 414.5 L1013.7 414.5 L1021.6 414.5 L1029.5 414.5 L1037.4 414.5 L1045.3 414.5 L1053.2 414.5 L1061.1 414.5 L1069.0 414.5 L1076.9 414.5" stroke-opacity="0.21" stroke-width="0.9"/>
<path d="M401.5 453.3 L409.2 453.2 L416.9 453.1 L424.6 453.0 L432.3 453.0 L440.0 452.8 L447.7 452.7 L455.4 452.6 L463.1 452.4 L470.8 452.3 L478.4 452.1 L486.1 452.0 L493.8 451.7 L501.5 451.6 L509.2 451.6 L516.9 451.7 L524.6 451.7 L532.3 451.7 L540.0 451.7 L547.7 451.9 L555.4 452.0 L563.1 452.2 L570.7 452.4 L578.4 452.6" stroke-opacity="0.26" stroke-width="1.2"/>
<path d="M613.9 436.1 L621.7 436.4 L629.5 436.7 L637.3 437.1 L645.1 437.4 L652.9 437.7 L660.8 438.1 L668.6 438.4 L676.4 438.7 L684.2 439.0 L692.0 439.3" stroke-opacity="0.50" stroke-width="1.1"/>
<path d="M622.9 404.5 L630.7 404.2 L638.5 404.0 L646.4 403.8 L654.2 403.6 L662.0 403.5 L669.9 403.4 L677.7 403.3 L685.5 403.2 L693.4 403.1 L701.2 403.0 L709.0 402.9 L716.9 402.9 L724.7 402.8 L732.5 402.8 L740.4 402.7 L748.2 402.6 L756.0 402.5" stroke-opacity="0.25" stroke-width="0.8"/>
<path d="M402.6 412.6 L410.3 412.6 L418.0 412.5 L425.6 412.5 L433.3 412.5 L441.0 412.6 L448.7 412.8 L456.4 412.9 L464.0 413.0 L471.7 413.2 L479.4 413.4 L487.1 413.5 L494.8 413.4 L502.4 413.4 L510.1 413.4 L517.8 413.4 L525.5 413.4 L533.2 413.5 L540.8 413.5 L548.5 413.2 L556.2 412.9" stroke-opacity="0.26" stroke-width="1.1"/>
<path d="M488.5 461.1 L496.5 460.8 L504.5 460.8 L512.5 460.9 L520.5 460.9 L528.4 461.0 L536.4 461.1 L544.4 461.4 L552.4 461.9" stroke-opacity="0.44" stroke-width="0.7"/>
<path d="M418.2 429.7 L426.0 429.7 L433.8 429.8 L441.7 429.8 L449.5 429.9 L457.4 430.0 L465.2 430.1 L473.0 430.1 L480.9 430.2 L488.7 430.2 L496.6 430.0 L504.4 430.0 L512.2 430.0 L520.1 430.0 L527.9 429.9 L535.7 429.9" stroke-opacity="0.49" stroke-width="0.7"/>
<path d="M601.6 461.4 L609.3 461.8 L617.1 462.2 L624.9 462.7 L632.7 463.1 L640.4 463.5 L648.2 463.9 L656.0 464.2 L663.8 464.5 L671.5 464.7 L679.3 465.0 L687.1 465.2 L694.9 465.4 L702.6 465.5" stroke-opacity="0.32" stroke-width="0.8"/>
<path d="M509.9 428.7 L517.8 429.0 L525.7 429.2 L533.7 429.5 L541.6 429.8 L549.5 429.9 L557.5 430.0 L565.4 430.1 L573.3 430.3 L581.3 430.4 L589.2 430.5 L597.1 430.6 L605.0 430.8 L613.0 430.9 L620.9 431.1 L628.8 431.2 L636.8 431.3 L644.7 431.4 L652.6 431.6 L660.6 431.7 L668.5 431.8 L676.4 431.9 L684.4 431.9 L692.3 432.0 L700.2 432.0 L708.1 432.0 L716.1 431.9" stroke-opacity="0.50" stroke-width="1.2"/>
<path d="M941.4 465.2 L949.3 465.5 L957.3 465.8 L965.3 466.1 L973.2 466.9 L981.2 462.1 L989.1 455.3 L997.1 466.3 L1005.0 466.4 L1013.0 466.5 L1020.9 466.5 L1028.9 466.6 L1036.8 466.7 L1044.8 466.8 L1052.7 466.8 L1060.7 466.9 L1068.6 466.9 L1076.6 467.0 L1084.5 467.0 L1092.5 467.1 L1100.4 467.1 L1108.4 467.1 L1116.3 467.2 L1124.3 467.2 L1132.2 467.2 L1140.2 467.2 L1148.1 467.2" stroke-opacity="0.31" stroke-width="0.6"/>
<path d="M587.4 416.7 L595.1 416.3 L602.9 415.8 L610.7 415.4 L618.4 415.0 L626.2 414.6 L634.0 414.2 L641.7 413.8 L649.5 413.5 L657.2 413.2 L665.0 413.0 L672.8 412.7 L680.5 412.5 L688.3 412.3 L696.1 412.1 L703.8 412.0 L711.6 411.9 L719.3 411.8 L727.1 411.7 L734.9 411.6 L742.6 411.6 L750.4 411.6 L758.2 411.6 L765.9 411.6 L773.7 411.6 L781.5 411.7 L789.2 411.7 L797.0 411.8 L804.7 411.9" stroke-opacity="0.49" stroke-width="1.3"/>
<path d="M693.5 406.2 L701.2 405.9 L708.9 405.8 L716.5 405.6 L724.2 405.4 L731.9 405.2 L739.6 405.0 L747.3 404.9 L755.0 404.7 L762.7 404.5 L770.4 404.3 L778.1 404.1 L785.8 403.9 L793.5 403.7 L801.2 403.6 L808.9 403.4 L816.6 403.2 L824.3 403.0 L832.0 402.8 L839.7 402.6 L847.4 402.4 L855.1 402.1 L862.8 401.8" stroke-opacity="0.35" stroke-width="1.1"/>
<path d="M394.3 434.9 L401.9 435.2 L409.6 435.5 L417.2 435.8 L424.9 436.0 L432.5 436.2 L440.1 436.3 L447.8 436.5 L455.4 436.5 L463.1 436.6 L470.7 436.5 L478.3 436.5 L486.0 436.3 L493.6 436.0 L501.3 435.8 L508.9 435.5 L516.5 435.3 L524.2 435.0 L531.8 434.7 L539.5 434.4" stroke-opacity="0.21" stroke-width="0.7"/>
<path d="M717.0 412.3 L724.7 412.2 L732.4 412.1 L740.1 412.1 L747.8 412.0 L755.5 411.9 L763.2 411.8 L770.9 411.7 L778.6 411.6 L786.3 411.5 L793.9 411.4 L801.6 411.3 L809.3 411.2 L817.0 411.1 L824.7 411.0 L832.4 410.9 L840.1 410.8 L847.8 410.6 L855.5 410.4 L863.2 410.2 L870.9 410.0 L878.6 409.8" stroke-opacity="0.37" stroke-width="1.0"/>
<path d="M611.5 438.2 L619.2 438.1 L626.8 437.9 L634.4 437.6 L642.1 437.4 L649.7 437.1 L657.3 436.8 L665.0 436.5 L672.6 436.2 L680.2 435.9 L687.9 435.6 L695.5 435.3 L703.2 434.9 L710.8 434.5 L718.4 434.2 L726.1 433.8 L733.7 433.5 L741.3 433.3 L749.0 433.1 L756.6 432.9" stroke-opacity="0.26" stroke-width="0.9"/>
<path d="M763.0 418.4 L770.8 418.7 L778.7 418.9 L786.5 419.2 L794.3 419.4 L802.2 419.5 L810.0 419.6 L817.8 419.6 L825.7 419.6 L833.5 419.5 L841.3 419.3 L849.2 419.0 L857.0 418.7" stroke-opacity="0.50" stroke-width="1.3"/>
<path d="M404.0 418.5 L411.8 418.4 L419.6 418.4 L427.5 418.4 L435.3 418.4 L443.1 418.4 L451.0 418.5 L458.8 418.6 L466.7 418.6 L474.5 418.7 L482.3 418.7" stroke-opacity="0.30" stroke-width="0.7"/>
<path d="M860.2 445.5 L868.2 445.4 L876.1 445.4 L884.1 445.3 L892.0 445.3 L899.9 445.2 L907.9 445.1 L915.8 445.0 L923.7 444.9 L931.7 444.7 L939.6 444.6 L947.5 444.4 L955.5 444.3 L963.4 444.1 L971.3 444.5 L979.3 444.1 L987.2 440.8 L995.1 443.1 L1003.1 442.9 L1011.0 442.7 L1018.9 442.5 L1026.9 442.2" stroke-opacity="0.44" stroke-width="0.8"/>
<path d="M758.0 402.2 L765.8 402.2 L773.5 402.2 L781.3 402.2 L789.0 402.2 L796.7 402.2 L804.5 402.2 L812.2 402.2 L820.0 402.1 L827.7 402.1 L835.4 402.0 L843.2 402.0 L850.9 401.8 L858.7 401.5 L866.4 401.3 L874.1 401.0 L881.9 400.7 L889.6 400.4 L897.4 400.1 L905.1 399.7 L912.9 399.4 L920.6 399.0 L928.3 398.6 L936.1 398.3 L943.8 397.9 L951.6 397.5 L959.3 397.2 L967.0 396.8" stroke-opacity="0.27" stroke-width="1.0"/>
<path d="M790.6 445.9 L798.2 445.8 L805.9 445.7 L813.6 445.6 L821.2 445.5 L828.9 445.4 L836.6 445.2 L844.2 445.1 L851.9 445.1 L859.6 445.1 L867.2 445.0" stroke-opacity="0.45" stroke-width="0.7"/>
<path d="M614.1 398.7 L621.6 398.3 L629.1 397.9 L636.6 397.5 L644.1 397.1 L651.6 396.8 L659.0 396.5 L666.5 396.1 L674.0 395.8 L681.5 395.5 L689.0 395.1 L696.5 394.7 L703.9 394.4" stroke-opacity="0.42" stroke-width="1.0"/>
<path d="M616.6 404.3 L623.6 403.9 L630.5 403.5 L637.5 403.1 L644.4 402.7 L651.4 402.4 L658.4 402.1" stroke-opacity="0.45" stroke-width="1.0"/>
<path d="M448.9 421.1 L456.7 421.1 L464.6 421.1 L472.5 421.2 L480.3 421.2 L488.2 421.1 L496.1 420.9 L503.9 420.8 L511.8 420.6" stroke-opacity="0.47" stroke-width="0.7"/>
<path d="M509.7 450.5 L517.0 450.5 L524.3 450.4 L531.7 450.3 L539.0 450.3 L546.3 450.4 L553.6 450.6 L560.9 450.8 L568.2 451.0" stroke-opacity="0.23" stroke-width="1.3"/>
<path d="M878.8 461.1 L886.8 461.8 L894.7 462.5 L902.7 463.1 L910.7 463.6 L918.7 464.0 L926.7 464.4 L934.7 464.7 L942.7 464.9 L950.7 464.9 L958.7 464.9 L966.6 464.8 L974.6 465.6 L982.6 459.3 L990.6 452.6 L998.6 463.0 L1006.6 462.5 L1014.6 462.0 L1022.6 461.5 L1030.6 461.0 L1038.6 460.6 L1046.5 460.3 L1054.5 460.1 L1062.5 459.9 L1070.5 459.9 L1078.5 459.9 L1086.5 460.1 L1094.5 460.3" stroke-opacity="0.29" stroke-width="1.3"/>
<path d="M841.3 461.0 L849.2 461.1 L857.0 461.3 L864.8 461.5 L872.6 461.7 L880.4 461.8 L888.3 462.0 L896.1 462.2 L903.9 462.3 L911.7 462.5 L919.6 462.6 L927.4 462.7 L935.2 462.9 L943.0 463.0 L950.8 463.1 L958.7 463.3 L966.5 463.4 L974.3 464.4 L982.1 458.9 L989.9 452.8 L997.8 463.0 L1005.6 462.9 L1013.4 462.8 L1021.2 462.8 L1029.1 462.7 L1036.9 462.6" stroke-opacity="0.46" stroke-width="1.2"/>
<path d="M493.5 430.5 L501.3 430.5 L509.0 430.6 L516.8 430.8 L524.6 430.9 L532.4 431.1 L540.2 431.2 L548.0 431.2 L555.8 431.2 L563.6 431.2 L571.4 431.2 L579.2 431.2 L587.0 431.2 L594.7 431.2 L602.5 431.3 L610.3 431.3 L618.1 431.4 L625.9 431.4 L633.7 431.5 L641.5 431.5 L649.3 431.5 L657.1 431.6 L664.9 431.7 L672.7 431.7 L680.4 431.8" stroke-opacity="0.19" stroke-width="0.7"/>
<path d="M557.0 467.4 L564.8 467.8 L572.6 468.2 L580.4 468.7 L588.3 469.1 L596.1 469.5 L603.9 469.9 L611.7 470.3 L619.5 470.6 L627.4 471.0 L635.2 471.4 L643.0 471.7 L650.8 472.0 L658.7 472.3 L666.5 472.6 L674.3 472.8 L682.1 473.1 L690.0 473.3 L697.8 473.6 L705.6 473.6 L713.4 473.5 L721.2 473.4 L729.1 473.3 L736.9 473.2 L744.7 473.1 L752.5 473.0" stroke-opacity="0.49" stroke-width="1.0"/>
<path d="M923.5 477.4 L931.1 477.6 L938.7 477.9 L946.3 478.1 L953.9 478.4 L961.5 478.6 L969.1 478.9 L976.7 477.4 L984.3 469.0" stroke-opacity="0.21" stroke-width="0.9"/>
<path d="M797.1 444.1 L804.5 444.1 L812.0 444.1 L819.4 444.1 L826.8 444.0 L834.2 443.9 L841.6 443.9 L849.1 443.8 L856.5 443.8 L863.9 443.8 L871.3 443.8 L878.7 443.7 L886.2 443.7 L893.6 443.6" stroke-opacity="0.26" stroke-width="1.1"/>
<path d="M361.0 438.3 L369.0 438.3 L376.9 438.4 L384.9 438.3 L392.8 438.3 L400.7 438.4 L408.7 438.4 L416.6 438.5 L424.6 438.5 L432.5 438.5 L440.5 438.5 L448.4 438.5 L456.4 438.5 L464.3 438.5 L472.3 438.5 L480.2 438.5 L488.2 438.4 L496.1 438.2 L504.0 438.1 L512.0 438.1 L519.9 438.0 L527.9 438.0 L535.8 437.9 L543.8 437.8 L551.7 437.7 L559.7 437.5 L567.6 437.4" stroke-opacity="0.30" stroke-width="0.6"/>
<path d="M758.5 419.6 L766.2 419.4 L773.8 419.2 L781.5 418.9 L789.1 418.7 L796.8 418.4 L804.4 418.2 L812.1 417.9 L819.7 417.6 L827.4 417.4 L835.0 417.1 L842.7 416.8 L850.3 416.5 L858.0 416.2" stroke-opacity="0.28" stroke-width="0.9"/>
<path d="M601.4 407.3 L609.2 406.9 L617.0 406.5 L624.7 406.1 L632.5 405.7 L640.3 405.2 L648.0 404.8 L655.8 404.5 L663.6 404.2 L671.4 403.9 L679.1 403.6 L686.9 403.3 L694.7 403.0" stroke-opacity="0.47" stroke-width="1.0"/>
<path d="M540.6 400.3 L548.3 399.7 L556.0 399.0 L563.7 398.4 L571.4 397.8 L579.1 397.2 L586.8 396.6 L594.5 396.1 L602.2 395.6 L609.9 395.2 L617.6 394.7 L625.3 394.3 L633.0 393.9 L640.7 393.5 L648.4 393.1 L656.1 392.9 L663.8 392.6 L671.5 392.4 L679.2 392.2" stroke-opacity="0.39" stroke-width="0.9"/>
<path d="M625.3 432.0 L633.1 432.1 L641.0 432.3 L648.8 432.4 L656.7 432.6 L664.5 432.8 L672.4 433.0 L680.2 433.2 L688.1 433.3 L695.9 433.5 L703.8 433.6" stroke-opacity="0.21" stroke-width="1.0"/>
<path d="M739.8 463.0 L747.5 462.9 L755.2 462.7 L762.9 462.6 L770.6 462.5 L778.4 462.3 L786.1 462.2 L793.8 462.0 L801.5 461.9 L809.2 461.7 L816.9 461.5 L824.7 461.3 L832.4 461.1 L840.1 460.9" stroke-opacity="0.24" stroke-width="0.6"/>
<path d="M506.9 456.6 L514.8 456.6 L522.6 456.7 L530.4 456.7 L538.3 456.8 L546.1 457.0 L554.0 457.3 L561.8 457.7 L569.7 458.0 L577.5 458.3 L585.4 458.6 L593.2 459.0 L601.0 459.3 L608.9 459.7 L616.7 460.0 L624.6 460.4 L632.4 460.7" stroke-opacity="0.24" stroke-width="1.1"/>
<path d="M656.6 446.1 L664.3 446.2 L671.9 446.3 L679.5 446.5 L687.1 446.6 L694.8 446.7 L702.4 446.8 L710.0 446.7 L717.7 446.7 L725.3 446.6 L732.9 446.6 L740.5 446.6" stroke-opacity="0.21" stroke-width="0.9"/>
<path d="M465.5 435.0 L473.4 435.1 L481.3 435.3 L489.1 435.4 L497.0 435.3 L504.9 435.4 L512.7 435.6 L520.6 435.7 L528.5 435.8 L536.3 435.9 L544.2 436.0 L552.1 436.0 L559.9 436.0 L567.8 436.0 L575.7 436.0 L583.6 436.0 L591.4 435.9 L599.3 435.9 L607.2 435.9 L615.0 435.9 L622.9 435.8 L630.8 435.8 L638.6 435.7 L646.5 435.7 L654.4 435.7 L662.2 435.6 L670.1 435.6 L678.0 435.6" stroke-opacity="0.33" stroke-width="1.2"/>
<path d="M760.5 440.9 L768.3 440.7 L776.1 440.5 L783.9 440.3 L791.7 440.0 L799.4 439.8 L807.2 439.6 L815.0 439.5 L822.8 439.3 L830.6 439.1 L838.3 438.9 L846.1 438.8 L853.9 438.8 L861.7 438.7 L869.5 438.7 L877.2 438.7 L885.0 438.7 L892.8 438.7 L900.6 438.7 L908.4 438.7 L916.1 438.7 L923.9 438.8 L931.7 438.8 L939.5 438.9 L947.3 439.0 L955.0 439.0 L962.8 439.1 L970.6 439.5 L978.4 440.1" stroke-opacity="0.41" stroke-width="1.0"/>
<path d="M858.3 465.6 L866.0 466.0 L873.7 466.3 L881.4 466.7 L889.1 467.1 L896.8 467.5 L904.5 467.9 L912.2 468.3 L919.9 468.7 L927.6 469.1 L935.4 469.6 L943.1 470.0 L950.8 470.5 L958.5 470.9 L966.2 471.3 L973.9 472.3 L981.6 466.4 L989.3 459.2 L997.0 472.0" stroke-opacity="0.26" stroke-width="1.0"/>
<path d="M819.5 444.2 L827.4 444.3 L835.2 444.4 L843.1 444.6 L851.0 444.8 L858.9 445.0 L866.7 445.1 L874.6 445.3 L882.5 445.4 L890.3 445.5 L898.2 445.5 L906.1 445.5 L914.0 445.5 L921.8 445.5 L929.7 445.4 L937.6 445.3 L945.4 445.2 L953.3 445.1" stroke-opacity="0.27" stroke-width="0.8"/>
<path d="M684.1 412.6 L691.3 412.6 L698.5 412.6 L705.7 412.6 L712.9 412.6 L720.2 412.7 L727.4 412.7 L734.6 412.7 L741.8 412.7 L749.0 412.7" stroke-opacity="0.31" stroke-width="1.0"/>
<path d="M609.5 425.5 L617.2 425.3 L624.9 425.2 L632.6 425.1 L640.4 425.0 L648.1 424.9 L655.8 424.9 L663.5 424.9 L671.2 424.9 L679.0 424.9 L686.7 424.9" stroke-opacity="0.45" stroke-width="1.1"/>
<path d="M588.2 421.0 L595.1 420.8 L601.9 420.6 L608.8 420.5 L615.6 420.4 L622.4 420.2 L629.3 420.1" stroke-opacity="0.31" stroke-width="1.1"/>
<path d="M687.7 411.9 L695.5 411.6 L703.3 411.4 L711.1 411.3 L719.0 411.1 L726.8 410.9 L734.6 410.7 L742.4 410.5 L750.2 410.3 L758.1 410.1 L765.9 409.9 L773.7 409.7 L781.5 409.5 L789.3 409.2 L797.2 409.0 L805.0 408.8 L812.8 408.6 L820.6 408.4 L828.4 408.2 L836.3 408.1" stroke-opacity="0.29" stroke-width="1.1"/>
<path d="M602.6 431.4 L610.3 431.4 L618.1 431.5 L625.8 431.5 L633.6 431.5 L641.3 431.6 L649.1 431.6 L656.8 431.7 L664.6 431.7 L672.3 431.8" stroke-opacity="0.31" stroke-width="1.0"/>
<path d="M376.3 395.6 L384.0 405.2 L391.8 405.3 L399.6 405.5 L407.4 405.8 L415.2 406.1 L423.0 406.4 L430.8 406.8 L438.5 407.3 L446.3 407.9 L454.1 408.5 L461.9 409.0 L469.7 409.6 L477.5 410.2 L485.2 410.8 L493.0 411.0 L500.8 411.2 L508.6 411.4 L516.4 411.6 L524.2 411.7 L532.0 411.7" stroke-opacity="0.25" stroke-width="0.8"/>
<path d="M816.7 456.0 L824.5 456.3 L832.2 456.5 L839.9 456.7 L847.7 456.9 L855.4 457.2 L863.1 457.5 L870.9 457.7 L878.6 457.9 L886.3 458.1 L894.1 458.3 L901.8 458.4 L909.5 458.4 L917.2 458.5 L925.0 458.5" stroke-opacity="0.19" stroke-width="1.0"/>
<path d="M959.9 449.5 L967.9 449.6 L975.8 451.1 L983.7 447.5 L991.6 443.9 L999.6 449.5 L1007.5 449.5 L1015.4 449.4 L1023.3 449.4 L1031.2 449.3 L1039.2 449.2 L1047.1 449.1 L1055.0 449.0 L1062.9 448.9" stroke-opacity="0.48" stroke-width="0.7"/>
<path d="M372.2 394.4 L379.7 404.3 L387.2 404.5 L394.7 404.8 L402.2 405.0 L409.7 405.3 L417.2 405.6 L424.7 405.9 L432.2 406.2 L439.7 406.7" stroke-opacity="0.40" stroke-width="1.1"/>
<path d="M460.7 450.4 L468.5 450.3 L476.4 450.1 L484.2 450.0 L492.1 449.8 L500.0 449.7 L507.8 449.8 L515.7 449.8 L523.5 449.9 L531.4 449.9 L539.3 450.0 L547.1 450.2 L555.0 450.4 L562.8 450.6 L570.7 450.8 L578.5 451.0 L586.4 451.2 L594.3 451.4 L602.1 451.7 L610.0 451.9" stroke-opacity="0.21" stroke-width="0.6"/>
<path d="M547.2 463.8 L554.9 464.3 L562.6 464.9 L570.3 465.4 L578.0 465.9 L585.7 466.4 L593.4 466.9 L601.1 467.4 L608.9 467.9 L616.6 468.4 L624.3 468.9 L632.0 469.4 L639.7 469.9 L647.4 470.5 L655.1 470.9 L662.8 471.3 L670.5 471.8 L678.3 472.2 L686.0 472.6 L693.7 473.0 L701.4 473.4 L709.1 473.5" stroke-opacity="0.40" stroke-width="1.0"/>
<path d="M421.1 460.3 L428.9 460.2 L436.7 460.0 L444.5 459.7 L452.3 459.3 L460.1 459.0 L467.8 458.6 L475.6 458.2 L483.4 457.8 L491.2 457.3 L499.0 456.9 L506.8 456.7 L514.6 456.5 L522.3 456.3 L530.1 456.1 L537.9 456.0 L545.7 456.1 L553.5 456.3 L561.3 456.5 L569.0 456.7 L576.8 457.0 L584.6 457.3 L592.4 457.7 L600.2 458.1" stroke-opacity="0.43" stroke-width="0.8"/>
<path d="M617.0 433.6 L624.6 433.5 L632.3 433.5 L639.9 433.4 L647.5 433.4 L655.1 433.4 L662.8 433.4 L670.4 433.4 L678.0 433.4 L685.6 433.4 L693.2 433.4 L700.9 433.4 L708.5 433.3 L716.1 433.2 L723.7 433.1" stroke-opacity="0.21" stroke-width="1.3"/>
<path d="M741.4 451.5 L749.2 451.5 L757.1 451.6 L765.0 451.7 L772.9 451.7 L780.8 451.8 L788.6 451.9 L796.5 451.9 L804.4 452.0 L812.3 452.0 L820.2 452.1 L828.1 452.1 L835.9 452.1 L843.8 452.2 L851.7 452.3 L859.6 452.5 L867.5 452.7 L875.3 452.8 L883.2 453.0 L891.1 453.1 L899.0 453.3 L906.9 453.4 L914.8 453.5 L922.6 453.6 L930.5 453.8" stroke-opacity="0.27" stroke-width="1.2"/>
<path d="M682.9 429.1 L690.8 428.9 L698.8 428.6 L706.7 428.2 L714.7 427.9 L722.6 427.5 L730.5 427.2 L738.5 426.9 L746.4 426.6 L754.4 426.4 L762.3 426.1 L770.2 425.9 L778.2 425.8 L786.1 425.6 L794.1 425.5 L802.0 425.4 L809.9 425.4" stroke-opacity="0.45" stroke-width="0.7"/>
<path d="M889.0 427.9 L896.6 428.0 L904.2 428.1 L911.9 428.2 L919.5 428.4 L927.1 428.5 L934.7 428.6 L942.4 428.8 L950.0 428.9 L957.6 429.1 L965.2 429.3 L972.9 430.9" stroke-opacity="0.45" stroke-width="0.7"/>
<path d="M487.3 423.1 L495.3 423.2 L503.2 423.5 L511.2 423.7 L519.2 424.0 L527.2 424.2 L535.2 424.5 L543.2 424.6 L551.1 424.6 L559.1 424.5 L567.1 424.5 L575.1 424.4 L583.1 424.4 L591.1 424.3 L599.0 424.3 L607.0 424.3 L615.0 424.2 L623.0 424.2 L631.0 424.1 L638.9 424.0 L646.9 423.9 L654.9 423.9 L662.9 423.8 L670.9 423.8" stroke-opacity="0.18" stroke-width="1.3"/>
<path d="M411.4 435.0 L419.1 435.0 L426.8 435.0 L434.5 435.1 L442.2 435.1 L449.9 435.1 L457.6 435.2 L465.3 435.2 L473.0 435.2 L480.8 435.2 L488.5 435.1 L496.2 434.9 L503.9 434.8 L511.6 434.7 L519.3 434.7 L527.0 434.6 L534.7 434.5 L542.4 434.4 L550.1 434.2 L557.9 434.0 L565.6 433.8 L573.3 433.6 L581.0 433.3" stroke-opacity="0.34" stroke-width="1.2"/>
<path d="M415.8 448.1 L423.8 448.1 L431.8 448.1 L439.8 448.1 L447.8 448.1 L455.8 448.1 L463.8 448.1 L471.8 448.1 L479.7 448.0 L487.7 448.0 L495.7 447.8" stroke-opacity="0.35" stroke-width="0.9"/>
<path d="M807.6 451.3 L815.2 451.4 L822.9 451.5 L830.5 451.5 L838.2 451.5 L845.8 451.6 L853.5 451.8 L861.2 451.9 L868.8 452.0 L876.5 452.1 L884.1 452.2 L891.8 452.3 L899.4 452.4 L907.1 452.4" stroke-opacity="0.24" stroke-width="0.7"/>
<path d="M681.5 407.9 L689.2 407.8 L696.9 407.7 L704.6 407.6 L712.3 407.6 L720.0 407.6 L727.7 407.6 L735.4 407.5 L743.2 407.5 L750.9 407.5 L758.6 407.4 L766.3 407.4 L774.0 407.3 L781.7 407.3 L789.4 407.2 L797.1 407.2 L804.8 407.1 L812.5 407.0 L820.2 407.0 L827.9 406.9 L835.6 406.8 L843.3 406.7 L851.0 406.5 L858.7 406.2" stroke-opacity="0.49" stroke-width="1.0"/>
<path d="M529.8 414.1 L537.1 414.0 L544.3 413.7 L551.6 413.3 L558.8 412.8 L566.1 412.3 L573.4 411.9 L580.6 411.5 L587.9 411.0" stroke-opacity="0.35" stroke-width="0.8"/>
<path d="M944.6 450.7 L952.3 450.8 L960.1 450.9 L967.8 451.0 L975.6 452.3 L983.4 448.0 L991.1 443.7 L998.9 450.8 L1006.6 450.8 L1014.4 450.8 L1022.1 450.8 L1029.9 450.8 L1037.6 450.8 L1045.4 450.8 L1053.2 450.9 L1060.9 450.9 L1068.7 450.9 L1076.4 450.9 L1084.2 451.0" stroke-opacity="0.46" stroke-width="1.0"/>
<path d="M641.6 409.7 L649.6 409.5 L657.5 409.3 L665.5 409.1 L673.4 408.9 L681.4 408.7 L689.4 408.5 L697.3 408.3 L705.3 408.2 L713.2 408.0 L721.2 407.9 L729.1 407.8 L737.1 407.6 L745.0 407.5 L753.0 407.3 L760.9 407.2" stroke-opacity="0.44" stroke-width="0.9"/>
<path d="M404.4 401.2 L412.1 401.5 L419.8 401.7 L427.4 402.0 L435.1 402.2 L442.8 402.7 L450.4 403.1 L458.1 403.5 L465.8 403.9 L473.4 404.3 L481.1 404.7 L488.8 405.0 L496.4 405.1 L504.1 405.2 L511.8 405.2 L519.4 405.3 L527.1 405.4 L534.8 405.5 L542.4 405.3 L550.1 404.9 L557.7 404.4" stroke-opacity="0.50" stroke-width="0.7"/>
<path d="M818.7 457.4 L826.5 457.4 L834.4 457.5 L842.2 457.5 L850.1 457.7 L857.9 458.0 L865.8 458.2 L873.6 458.5 L881.5 458.7 L889.3 459.0 L897.2 459.3 L905.0 459.5 L912.9 459.8 L920.7 460.0 L928.6 460.3 L936.4 460.6 L944.3 460.8 L952.1 461.1 L960.0 461.3 L967.8 461.6" stroke-opacity="0.32" stroke-width="1.2"/>
<path d="M954.0 446.3 L961.9 446.3 L969.8 446.3 L977.8 447.1 L985.7 443.9 L993.6 440.7 L1001.5 445.9 L1009.4 445.8 L1017.3 445.7 L1025.2 445.6 L1033.2 445.5 L1041.1 445.4 L1049.0 445.3" stroke-opacity="0.25" stroke-width="0.7"/>
<path d="M756.3 406.2 L763.8 406.0 L771.4 405.7 L779.0 405.5 L786.6 405.2 L794.2 405.0 L801.8 404.8 L809.4 404.6 L816.9 404.4 L824.5 404.3" stroke-opacity="0.37" stroke-width="0.8"/>
<path d="M498.9 445.9 L506.9 445.9 L514.8 446.0 L522.8 446.0 L530.7 446.0 L538.7 446.1 L546.7 446.2 L554.6 446.4 L562.6 446.6 L570.6 446.8 L578.5 446.9 L586.5 447.1 L594.5 447.3 L602.4 447.6 L610.4 447.8 L618.4 448.0 L626.3 448.3 L634.3 448.5 L642.2 448.8 L650.2 449.1 L658.2 449.3 L666.1 449.6" stroke-opacity="0.43" stroke-width="1.0"/>
<path d="M756.7 428.0 L764.4 428.0 L772.1 428.1 L779.8 428.1 L787.5 428.1 L795.2 428.2 L802.9 428.2 L810.7 428.2 L818.4 428.2 L826.1 428.2 L833.8 428.2 L841.5 428.2 L849.2 428.1 L856.9 428.1 L864.6 428.1 L872.3 428.0 L880.0 428.0 L887.7 427.9 L895.4 427.8 L903.1 427.8 L910.8 427.7 L918.5 427.6 L926.2 427.4 L933.9 427.3 L941.7 427.2 L949.4 427.1 L957.1 426.9 L964.8 426.7" stroke-opacity="0.44" stroke-width="0.6"/>
<path d="M459.6 452.5 L467.5 452.5 L475.4 452.5 L483.4 452.5 L491.3 452.3 L499.3 452.2 L507.2 452.2 L515.2 452.2 L523.1 452.2 L531.1 452.2 L539.0 452.1 L547.0 452.2 L554.9 452.2" stroke-opacity="0.40" stroke-width="1.1"/>
<path d="M925.6 431.5 L933.3 431.5 L940.9 431.5 L948.6 431.6 L956.2 431.6 L963.9 431.7 L971.5 432.6 L979.2 433.8 L986.8 432.8 L994.5 431.9 L1002.1 432.1 L1009.8 432.3 L1017.4 432.4 L1025.1 432.4 L1032.7 432.5 L1040.4 432.6 L1048.0 432.6 L1055.7 432.6" stroke-opacity="0.28" stroke-width="0.8"/>
<path d="M414.8 457.5 L422.7 457.3 L430.6 457.1 L438.5 456.9 L446.4 456.7 L454.3 456.4 L462.2 456.2 L470.1 455.9 L477.9 455.7 L485.8 455.4 L493.7 455.1 L501.6 455.0 L509.5 455.0 L517.4 455.0 L525.3 455.0 L533.2 455.0 L541.1 455.1 L549.0 455.3 L556.9 455.6 L564.8 455.8 L572.7 456.1 L580.6 456.4 L588.5 456.6 L596.4 456.9 L604.3 457.2 L612.2 457.5 L620.0 457.8 L627.9 458.0" stroke-opacity="0.40" stroke-width="0.8"/>
<path d="M384.1 429.4 L391.8 429.4 L399.5 429.4 L407.1 429.4 L414.8 429.4 L422.4 429.4 L430.1 429.4 L437.7 429.4 L445.4 429.5 L453.1 429.5 L460.7 429.6 L468.4 429.7 L476.0 429.8 L483.7 429.9 L491.3 429.9 L499.0 429.9 L506.7 430.0 L514.3 430.1 L522.0 430.2 L529.6 430.3 L537.3 430.4 L545.0 430.5 L552.6 430.5 L560.3 430.5" stroke-opacity="0.37" stroke-width="1.0"/>
<path d="M655.0 420.7 L662.1 420.7 L669.1 420.6 L676.2 420.6 L683.2 420.6 L690.3 420.6 L697.4 420.6 L704.4 420.6 L711.5 420.6" stroke-opacity="0.29" stroke-width="1.1"/>
<path d="M532.9 456.7 L540.7 456.7 L548.5 457.0 L556.3 457.1 L564.1 457.3 L571.8 457.5 L579.6 457.7 L587.4 457.8 L595.2 457.9 L603.0 458.1 L610.8 458.2 L618.5 458.3 L626.3 458.4 L634.1 458.5 L641.9 458.6 L649.7 458.7 L657.5 458.8 L665.2 458.9 L673.0 459.0 L680.8 459.0 L688.6 459.1 L696.4 459.2 L704.2 459.2 L711.9 459.1 L719.7 458.9 L727.5 458.8 L735.3 458.7 L743.1 458.6" stroke-opacity="0.28" stroke-width="1.3"/>
<path d="M602.5 471.2 L610.3 471.5 L618.1 471.8 L625.9 472.0 L633.7 472.3 L641.5 472.6 L649.3 472.8 L657.1 473.0 L664.9 473.2 L672.7 473.3 L680.5 473.5 L688.3 473.7 L696.1 473.9 L703.9 473.9 L711.7 473.8 L719.5 473.7 L727.3 473.6 L735.1 473.4" stroke-opacity="0.24" stroke-width="0.9"/>
<path d="M813.9 456.5 L821.5 456.5 L829.1 456.4 L836.8 456.3 L844.4 456.3 L852.0 456.4 L859.6 456.5 L867.3 456.6 L874.9 456.7 L882.5 456.7 L890.2 456.8 L897.8 456.9 L905.4 457.0 L913.0 457.0 L920.7 457.1 L928.3 457.2 L935.9 457.2 L943.6 457.3 L951.2 457.4 L958.8 457.5 L966.4 457.5" stroke-opacity="0.32" stroke-width="1.1"/>
<path d="M432.9 440.1 L440.8 440.2 L448.8 440.2 L456.8 440.3 L464.7 440.4 L472.7 440.6 L480.7 440.7 L488.6 440.8 L496.6 440.8 L504.6 441.0 L512.5 441.3 L520.5 441.5 L528.5 441.7 L536.5 442.0 L544.4 442.2 L552.4 442.4 L560.4 442.5 L568.3 442.7 L576.3 442.8 L584.3 443.0 L592.2 443.1 L600.2 443.2 L608.2 443.2 L616.1 443.3 L624.1 443.3 L632.1 443.4 L640.1 443.3 L648.0 443.3" stroke-opacity="0.36" stroke-width="0.7"/>
<path d="M955.4 428.2 L963.2 428.1 L971.1 428.7 L978.9 430.4 L986.8 429.8 L994.6 429.2 L1002.5 428.0 L1010.4 428.0 L1018.2 428.0 L1026.1 428.1 L1033.9 428.1 L1041.8 428.1 L1049.7 428.1 L1057.5 428.2 L1065.4 428.2 L1073.2 428.2 L1081.1 428.3 L1089.0 428.3 L1096.8 428.4 L1104.7 428.4 L1112.5 428.5 L1120.4 428.5 L1128.2 428.5 L1136.1 428.6 L1144.0 428.6 L1151.8 428.7 L1159.7 428.7" stroke-opacity="0.41" stroke-width="1.0"/>
<path d="M524.1 467.0 L532.0 467.1 L539.9 467.2 L547.8 467.6 L555.8 468.0 L563.7 468.5 L571.6 468.9 L579.5 469.3 L587.5 469.7 L595.4 470.1 L603.3 470.5 L611.3 470.8 L619.2 471.2 L627.1 471.5 L635.0 471.9 L643.0 472.2 L650.9 472.6 L658.8 472.8 L666.7 473.1 L674.7 473.3 L682.6 473.6 L690.5 473.9 L698.5 474.1 L706.4 474.1 L714.3 474.0" stroke-opacity="0.47" stroke-width="1.0"/>
<path d="M887.6 410.5 L895.4 410.2 L903.2 409.9 L911.1 409.7 L918.9 409.5 L926.7 409.3 L934.5 409.2 L942.3 409.0 L950.2 408.9 L958.0 408.8 L965.8 408.8 L973.6 411.2 L981.4 414.2 L989.3 416.7 L997.1 409.2 L1004.9 409.3 L1012.7 409.5 L1020.6 409.7 L1028.4 410.0 L1036.2 410.2 L1044.0 410.4 L1051.8 410.6 L1059.7 410.9 L1067.5 411.1 L1075.3 411.4 L1083.1 411.6" stroke-opacity="0.34" stroke-width="1.2"/>
<path d="M529.7 441.6 L537.5 441.9 L545.3 442.2 L553.1 442.4 L561.0 442.6 L568.8 442.8 L576.6 443.0 L584.4 443.1 L592.2 443.3 L600.0 443.4 L607.8 443.5 L615.6 443.6 L623.4 443.7" stroke-opacity="0.35" stroke-width="0.8"/>
<path d="M691.2 429.9 L698.8 429.8 L706.5 429.6 L714.1 429.4 L721.8 429.2 L729.4 429.0 L737.1 428.9 L744.7 428.7 L752.4 428.6 L760.1 428.6 L767.7 428.5 L775.4 428.4 L783.0 428.4 L790.7 428.4 L798.3 428.5 L806.0 428.5 L813.7 428.5 L821.3 428.6 L829.0 428.7" stroke-opacity="0.36" stroke-width="0.8"/>
<path d="M825.3 454.6 L833.3 454.4 L841.3 454.2 L849.3 454.2 L857.2 454.2 L865.2 454.2 L873.2 454.2" stroke-opacity="0.39" stroke-width="1.2"/>
<path d="M948.5 389.6 L956.1 389.2 L963.7 388.8 L971.3 389.5 L978.9 395.7 L986.5 401.5 L994.1 407.3 L1001.7 387.9 L1009.3 387.8 L1016.9 387.6 L1024.5 387.5 L1032.1 387.4 L1039.7 387.2 L1047.3 387.1 L1054.9 387.0 L1062.5 386.9 L1070.1 386.7 L1077.7 386.6" stroke-opacity="0.46" stroke-width="0.9"/>
<path d="M675.6 453.7 L683.2 453.9 L690.9 454.1 L698.5 454.3 L706.1 454.4 L713.8 454.3 L721.4 454.3 L729.1 454.3 L736.7 454.2 L744.3 454.2 L752.0 454.1 L759.6 454.0 L767.3 454.0 L774.9 453.9 L782.5 453.8 L790.2 453.7 L797.8 453.6" stroke-opacity="0.33" stroke-width="1.3"/>
<path d="M563.1 443.3 L571.0 443.3 L578.8 443.3 L586.7 443.3 L594.5 443.3 L602.3 443.3 L610.2 443.3 L618.0 443.3 L625.9 443.4 L633.7 443.4 L641.6 443.5 L649.4 443.5 L657.2 443.6 L665.1 443.7 L672.9 443.8 L680.8 443.9 L688.6 444.0 L696.5 444.1 L704.3 444.1 L712.1 444.1 L720.0 444.1 L727.8 444.0" stroke-opacity="0.30" stroke-width="0.8"/>
<path d="M791.2 465.8 L798.9 465.8 L806.6 465.7 L814.3 465.6 L822.0 465.5 L829.6 465.4 L837.3 465.3 L845.0 465.2 L852.7 465.3 L860.4 465.4 L868.1 465.6 L875.7 465.7 L883.4 465.9 L891.1 466.0 L898.8 466.2 L906.5 466.4 L914.1 466.6 L921.8 466.8 L929.5 467.1 L937.2 467.3 L944.9 467.6 L952.6 467.9 L960.2 468.2 L967.9 468.5" stroke-opacity="0.47" stroke-width="1.3"/>
<path d="M808.1 399.3 L815.9 399.0 L823.8 398.8 L831.7 398.5 L839.6 398.3 L847.4 397.9 L855.3 397.5 L863.2 397.1 L871.1 396.7 L878.9 396.3 L886.8 395.9 L894.7 395.5 L902.6 395.1 L910.4 394.7 L918.3 394.3 L926.2 394.0" stroke-opacity="0.40" stroke-width="1.2"/>
<path d="M387.6 417.1 L395.6 417.1 L403.5 417.2 L411.5 417.2 L419.5 417.3 L427.4 417.4 L435.4 417.6 L443.4 417.9 L451.4 418.2 L459.3 418.6 L467.3 418.9 L475.3 419.3 L483.2 419.7 L491.2 420.0 L499.2 420.2 L507.1 420.4 L515.1 420.7 L523.1 420.9 L531.1 421.2 L539.0 421.4 L547.0 421.4 L555.0 421.2 L562.9 421.1 L570.9 420.9" stroke-opacity="0.36" stroke-width="1.2"/>
<path d="M462.0 459.8 L469.7 459.9 L477.5 459.9 L485.2 460.0 L493.0 460.0 L500.7 460.0 L508.5 460.3 L516.2 460.5" stroke-opacity="0.23" stroke-width="0.9"/>
<path d="M503.8 432.2 Q554.6 411.3 605.5 432.2" stroke-opacity="0.34" stroke-width="0.8"/>
<path d="M422.6 439.8 Q503.7 422.4 584.8 439.8" stroke-opacity="0.34" stroke-width="0.8"/>
<path d="M522.2 411.3 Q662.1 433.0 802.1 411.3" stroke-opacity="0.25" stroke-width="0.8"/>
<path d="M583.8 445.1 Q723.1 432.3 862.5 445.1" stroke-opacity="0.25" stroke-width="0.8"/>
<path d="M602.9 450.1 Q719.9 441.3 837.0 450.1" stroke-opacity="0.37" stroke-width="0.8"/>
<path d="M827.8 441.1 Q898.6 461.9 969.3 441.1" stroke-opacity="0.33" stroke-width="0.8"/>
<path d="M634.2 435.7 Q749.1 454.3 864.0 435.7" stroke-opacity="0.33" stroke-width="0.8"/>
<path d="M821.0 450.3 Q898.8 435.2 976.6 450.3" stroke-opacity="0.35" stroke-width="0.8"/>
<path d="M350.5 418.1 Q467.8 428.9 585.0 418.1" stroke-opacity="0.36" stroke-width="0.8"/>
<path d="M789.4 417.6 Q884.5 430.0 979.7 417.6" stroke-opacity="0.25" stroke-width="0.8"/>
<path d="M734.5 441.7 Q857.1 421.7 979.7 441.7" stroke-opacity="0.36" stroke-width="0.8"/>
<path d="M550.3 414.2 Q668.2 402.6 786.1 414.2" stroke-opacity="0.39" stroke-width="0.8"/>
<path d="M725.3 420.1 Q846.4 428.3 967.6 420.1" stroke-opacity="0.29" stroke-width="0.8"/>
<path d="M674.0 455.1 Q776.6 433.9 879.2 455.1" stroke-opacity="0.22" stroke-width="0.8"/>
</g>
</g>
<!-- head -->
<clipPath id="headclip"><path d="M274.8 329 C270 335 262 350 258 362 C253 378 248 392 247 410 L245.5 458 C245.5 466 248 475 252 481.5 C259 492 263 505 263.4 517.6 C263.5 530 259 542 253 549 L252 551 L252 590 Q252 598.5 261 598.5 L328 598.5 Q336.4 598.5 336.4 590 L336.4 550 C332 546 326 538 323 526 C320 514 321 498 326 489 C330 482 336 478 345 476 C355 473 368 472 379 469.2 L379 392 Q379 390.7 376.8 390.5 L340 385.7 C332 384.5 326 383 322.9 380.7 C317 376 314 368 314.6 359 C315 352 318 346 320 342 C323 337 326 333 329.1 329 Z"/></clipPath>
<filter id="blur2" x="-20%" y="-20%" width="140%" height="140%"><feGaussianBlur stdDeviation="2"/></filter>
<filter id="blur1" x="-20%" y="-20%" width="140%" height="140%"><feGaussianBlur stdDeviation="1"/></filter>
<g filter="url(#noise)">
<path d="M274.8 329 C270 335 262 350 258 362 C253 378 248 392 247 410 L245.5 458 C245.5 466 248 475 252 481.5 C259 492 263 505 263.4 517.6 C263.5 530 259 542 253 549 L252 551 L252 590 Q252 598.5 261 598.5 L328 598.5 Q336.4 598.5 336.4 590 L336.4 550 C332 546 326 538 323 526 C320 514 321 498 326 489 C330 482 336 478 345 476 C355 473 368 472 379 469.2 L379 392 Q379 390.7 376.8 390.5 L340 385.7 C332 384.5 326 383 322.9 380.7 C317 376 314 368 314.6 359 C315 352 318 346 320 342 C323 337 326 333 329.1 329 Z" fill="url(#steel)"/>
<g clip-path="url(#headclip)">
<path d="M252 549 L337 549 L337 599 L251 599 Z" fill="url(#face)"/>
<path d="M252 548 L337 548" stroke="#2e2d2a" stroke-width="2.5" opacity="0.6" filter="url(#blur1)"/>
<path d="M250 596 L338 596" stroke="#252422" stroke-width="4" opacity="0.6" filter="url(#blur1)"/>
<path d="M276 552 L276 594" stroke="#7a7771" stroke-width="6" opacity="0.35" filter="url(#blur2)"/>
<path d="M289 488 L289 545" stroke="#6e6b66" stroke-width="8" opacity="0.3" filter="url(#blur2)"/>
<path d="M262 340 C255 360 252 380 254 400" stroke="#77746e" stroke-width="6" opacity="0.25" fill="none" filter="url(#blur2)"/>
<path d="M254 480 C268 494 276 515 275 535 L272 548 L252 548 Z" fill="#2a2927" opacity="0.85" filter="url(#blur2)"/>
<path d="M326 474 C306 490 300 515 303 535 L308 548 L337 548 L337 474 Z" fill="#2a2927" opacity="0.8" filter="url(#blur2)"/>
<path d="M333 329 C320 345 311 362 316 375 C320 384 332 387 345 389" stroke="#1e1d1b" stroke-width="7" fill="none" opacity="0.75" filter="url(#blur1)"/>
<path d="M274.8 329 C270 335 262 350 258 362 C253 378 248 392 247 410 L245.5 458 C245.5 466 248 475 252 481.5 C259 492 263 505 263.4 517.6 C263.5 530 259 542 253 549 L252 551 L252 590 Q252 598.5 261 598.5 L328 598.5 Q336.4 598.5 336.4 590 L336.4 550 C332 546 326 538 323 526 C320 514 321 498 326 489 C330 482 336 478 345 476 C355 473 368 472 379 469.2 L379 392 Q379 390.7 376.8 390.5 L340 385.7 C332 384.5 326 383 322.9 380.7 C317 376 314 368 314.6 359 C315 352 318 346 320 342 C323 337 326 333 329.1 329 Z" stroke="#232220" stroke-width="5" fill="none" opacity="0.7" filter="url(#blur1)"/>
<path d="M372 390 L372 470" stroke="#2a2927" stroke-width="6" opacity="0.4" filter="url(#blur2)"/>
</g>
</g>
<!-- grid -->
<rect x="95" y="155" width="1044" height="577" fill="url(#dots)" opacity="0.3"/>
<rect x="245" y="155" width="1" height="577" fill="#fff" opacity="0.07"/>
<rect x="845" y="155" width="1" height="577" fill="#fff" opacity="0.07"/>
<rect x="95" y="432" width="1044" height="1" fill="#fff" opacity="0.05"/>
<!-- red crosshair -->
<g stroke="#e02020" stroke-opacity="0.6" stroke-width="1.2" fill="none">
<path d="M225 432.3 L265 432.3 M245.2 412 L245.2 452"/>
<circle cx="245.2" cy="432.3" r="5"/>
</g>
<!-- corner handles -->
<g fill="#0000b0" stroke="#7c86c8" stroke-width="1">
<rect x="191.5" y="240.5" width="9" height="10"/>
<rect x="993.5" y="176.5" width="10" height="10"/>
<rect x="1024.5" y="561.5" width="9" height="10"/>
<rect x="222.5" y="625.5" width="9" height="10"/>
</g>
<!-- cursor ring -->
<g fill="none">
<circle cx="877" cy="578" r="37.5" stroke="#88a0b8" stroke-width="3" opacity="0.6"/>
<circle cx="877" cy="578" r="34.5" stroke="#7a91a8" stroke-width="2" opacity="0.65"/>
<circle cx="877" cy="578" r="32" stroke="#6a8098" stroke-width="2" opacity="0.5"/>
<circle cx="877" cy="578" r="29.8" stroke="#5a6e84" stroke-width="1.5" opacity="0.35"/>
</g>
<path d="M876.5 577.5 L876.5 600 L882.5 594.5 L886.3 603.5 L889.8 602 L886.2 593.5 L893 593 Z" fill="#fff" stroke="#fff" stroke-width="3" stroke-linejoin="round"/>
<path d="M876.5 577.5 L876.5 600 L882.5 594.5 L886.3 603.5 L889.8 602 L886.2 593.5 L893 593 Z" fill="#fff" stroke="#000" stroke-width="1.1" stroke-linejoin="round"/>
</svg>

<!-- V scroll -->
<div class="a" style="left:1139px;top:155px;width:14px;height:577px;background:#f7f7f7"></div>
<div class="a" style="left:1142px;top:330px;width:9px;height:262px;border-radius:5px;background:#808080"></div>
<!-- H scroll -->
<div class="a" style="left:72px;top:732px;width:23px;height:16px;background:#ececec"></div>
<div class="a" style="left:95px;top:732px;width:988px;height:16px;background:#f7f7f7"></div>
<div class="a" style="left:278px;top:735px;width:627px;height:9px;border-radius:5px;background:#808080"></div>
<div class="a" style="left:1083px;top:732px;width:70px;height:16px;background:#e6e6e6;font-size:13px;line-height:18px;text-align:right;color:#111">10 &lt; 100</div>

<!-- COMMAND -->
<div class="a" style="left:72px;top:747px;width:1081px;height:51px;background:#ececec;border-top:2px solid #c6c6c6"></div>
<div class="a" style="left:73px;top:750px;width:1066px;height:20px;background:#fff"></div>
<div class="a" style="left:1139px;top:750px;width:14px;height:20px;background:#f7f7f7"></div>
<div class="a" style="left:1142px;top:750px;width:8px;height:17px;border-radius:4px;background:#808080"></div>
<div class="a" style="left:72px;top:770px;width:1081px;height:1px;background:#c6c6c6"></div>
<div class="a" style="left:77px;top:750px;font-size:13px;line-height:17px;color:#1414d2;white-space:nowrap"><i>Kommando:</i> layeradd</div>
<div class="a" style="left:73px;top:777px;font-size:13px;line-height:17px;color:#111">Kommando:</div>
<div class="a" style="left:148px;top:776px;width:979px;height:18px;background:#fff"></div>
<div class="a" style="left:1127px;top:772px;width:26px;height:26px;border:1px solid #b5b5b5;background:linear-gradient(#f7f7f7,#e5e5e5)"></div>

<!-- LAYER PANEL -->
<div class="a" style="left:1153px;top:108px;width:302px;height:690px;background:#cfcfcf"></div>
<div class="a" style="left:1154px;top:108px;width:301px;height:22px;background:#ececec"></div>
<div class="a" style="left:1155px;top:130px;width:300px;height:668px;background:#fff;border-left:1px solid #c8c8c8"></div>
<div class="a" style="left:1155px;top:112px;width:299px;text-align:center;font-size:11.5px;line-height:14px;letter-spacing:0.2px;color:#1a1a1a;padding-left:34px">Layerliste</div>
<svg class="a" style="left:1153px;top:108px" width="302" height="120" viewBox="1153 108 302 120">
<defs>
<linearGradient id="lbg" x1="0" y1="0" x2="0" y2="1"><stop offset="0" stop-color="#e4e4e4"/><stop offset="1" stop-color="#f6f6f6"/></linearGradient>
<g id="eye"><path d="M-7.6 0.3 Q-4.5 -6 0 -6 Q4.5 -6 7.6 0.3 Q4.5 5.6 0 5.6 Q-4.5 5.6 -7.6 0.3 Z" fill="currentColor"/><path d="M-5.3 1.3 Q-2.8 -2.6 0 -2.6 Q2.8 -2.6 5.3 1.3 Q2.8 4.2 0 4.2 Q-2.8 4.2 -5.3 1.3 Z" fill="#fff"/><circle cx="0" cy="0.5" r="2.7" fill="currentColor"/></g><g id="eyeSel"><path d="M-7.6 0.3 Q-4.5 -6 0 -6 Q4.5 -6 7.6 0.3 Q4.5 5.6 0 5.6 Q-4.5 5.6 -7.6 0.3 Z" fill="currentColor"/><path d="M-5.3 1.3 Q-2.8 -2.6 0 -2.6 Q2.8 -2.6 5.3 1.3 Q2.8 4.2 0 4.2 Q-2.8 4.2 -5.3 1.3 Z" fill="#1a3f9a"/><circle cx="0" cy="0.5" r="2.7" fill="currentColor"/></g>
<g id="lock"><path d="M-3.2 -1 L-3.2 -4 Q-3.2 -7.6 0 -7.6 Q3.2 -7.6 3.2 -4 L3.2 -1" fill="none" stroke="#bcbcbc" stroke-width="1.8"/><rect x="-4.8" y="-2.5" width="9.6" height="8.5" rx="0.8" fill="#bcbcbc"/></g>
<g id="pen"><path d="M-7 7 L-5.5 3 L5 -7.5 L7.5 -5 L-3 5.5 Z" fill="#e8a830" stroke="#8a6420" stroke-width="0.6"/><path d="M5 -7.5 L6 -8.5 Q7 -9.2 8 -8.3 L8.4 -7.8 Q9 -7 8.2 -6 L7.5 -5 Z" fill="#e83838"/></g>
</defs>
<circle cx="1164" cy="118" r="7" fill="#6e6e6e"/>
<path d="M1161 115 L1167 121 M1167 115 L1161 121" stroke="#fff" stroke-width="1.8"/>
<circle cx="1182" cy="118" r="7" fill="#6e6e6e"/>
<rect x="1181.5" y="114.5" width="5" height="4" fill="none" stroke="#fff" stroke-width="1"/>
<rect x="1178" y="117" width="5.5" height="4.5" fill="#6e6e6e" stroke="#fff" stroke-width="1"/>
<rect x="1155" y="130" width="299" height="26" fill="#a9a9a9"/>
<rect x="1156" y="131" width="58.5" height="24" fill="url(#lbg)"/>
<rect x="1216" y="131" width="58.5" height="24" fill="url(#lbg)"/>
<rect x="1276" y="131" width="58.5" height="24" fill="url(#lbg)"/>
<rect x="1336" y="131" width="58.5" height="24" fill="url(#lbg)"/>
<rect x="1396" y="131" width="57.5" height="24" fill="url(#lbg)"/>
<use href="#eye" x="1184.5" y="142.7" style="color:#000"/>
<use href="#eye" x="1244.5" y="142.7" style="color:#a4a4a4"/>
<path d="M1299.5 142.5 L1310 142.5 M1304.8 137 L1304.8 148" stroke="#e00000" stroke-width="2.6"/>
<rect x="1359" y="141" width="11" height="3" fill="#e00000" stroke="#900" stroke-width="0.5"/>
<use href="#pen" x="1425" y="142.5"/>
<!-- rows -->
<rect x="1161.5" y="163.5" width="15" height="8" fill="#fff" stroke="#000" stroke-width="1"/>
<rect x="1161" y="183" width="16" height="9" fill="#000"/>
<rect x="1156" y="197" width="298" height="20" fill="#0a48d8"/>
<rect x="1161.5" y="203.5" width="15" height="8" fill="#e04050" stroke="#5a2030" stroke-width="1"/>
<use href="#eye" x="1422.8" y="167" style="color:#000"/>
<use href="#eye" x="1422.8" y="187" style="color:#000"/>
<use href="#eyeSel" x="1422.8" y="207" style="color:#000"/>
<use href="#lock" x="1445" y="168"/>
<use href="#lock" x="1445" y="188"/>
<use href="#lock" x="1445" y="208"/>
<use href="#pen" x="1401" y="207"/>
</svg>
<div class="a" style="left:1183px;top:159px;font-size:13px;line-height:16px;color:#111">0</div>
<div class="a" style="left:1183px;top:179px;font-size:13px;line-height:16px;color:#111">Bild</div>
<div class="a" style="left:1183px;top:199px;font-size:13px;line-height:16px;color:#fff">Nachzeichnung</div>

<div class="a" style="left:1454px;top:130px;width:1px;height:668px;background:#c8c8c8"></div>
<div class="a" style="left:1155px;top:797px;width:300px;height:1px;background:#c8c8c8"></div>
<!-- RIGHT SIDEBAR -->
<div class="a" style="left:1455px;top:108px;width:45px;height:690px;background:linear-gradient(90deg,#e4e4e4,#ececec 15%,#dcdcdc 60%,#c6c6c6 96%,#b8b8b8)"></div>
<svg class="a" style="left:1455px;top:108px" width="45" height="690" viewBox="1455 108 45 690">
<defs>
<g id="win"><rect x="0.5" y="0.5" width="27" height="27" fill="#fff" stroke="#444" stroke-width="1"/><rect x="0" y="0" width="28" height="5" fill="#000"/><rect x="1.5" y="1" width="3" height="3" fill="#fff"/></g>
</defs>
<g fill="#9c9c9c"><rect x="1462" y="116" width="2" height="2"/><rect x="1468" y="116" width="2" height="2"/><rect x="1474" y="116" width="2" height="2"/><rect x="1480" y="116" width="2" height="2"/><rect x="1486" y="116" width="2" height="2"/></g>
<rect x="1456.3" y="120" width="42" height="42.5" rx="5" fill="#b6b6b6"/>
<rect x="1456.3" y="417" width="42" height="43" rx="5" fill="#b6b6b6"/>
<use href="#win" x="1463" y="127"/>
<use href="#win" x="1463" y="174"/>
<use href="#win" x="1463" y="220"/>
<use href="#win" x="1463" y="276"/>
<use href="#win" x="1463" y="322"/>
<use href="#win" x="1463" y="368"/>
<use href="#win" x="1463" y="424"/>
<use href="#win" x="1463" y="471"/>
<g fill="#8a8a8a">
<rect x="1455" y="261" width="45" height="1" fill="url(#hd)"/>
</g>
<defs><pattern id="hd" x="1455" y="0" width="3" height="1" patternUnits="userSpaceOnUse"><rect width="1" height="1" fill="#707070"/></pattern></defs>
<rect x="1455" y="409" width="45" height="1" fill="url(#hd)"/>
<rect x="1455" y="512" width="45" height="1" fill="url(#hd)"/>
<!-- icon 1 : layer stack -->
<path d="M1471 139 L1479 136 L1479 148 L1471 151 Z" fill="#c8c8c8" stroke="#555" stroke-width="0.8"/>
<path d="M1474 138 L1483 134.5 L1483 147 L1474 150.5 Z" fill="#fff" stroke="#555" stroke-width="0.8"/>
<path d="M1476.5 147 L1481 138.5 L1480.5 146 Z" fill="none" stroke="#f04040" stroke-width="0.9"/>
<!-- icon 2 : shapes -->
<rect x="1470" y="183" width="11" height="8" fill="#fbefc4" stroke="#555" stroke-width="0.9"/>
<circle cx="1479" cy="192" r="4.5" fill="#fbefc4" fill-opacity="0.85" stroke="#555" stroke-width="0.9"/>
<!-- icon 3 : rounded rect -->
<rect x="1468.5" y="230.5" width="16" height="11" rx="2" fill="#f4f4f4" stroke="#c0d0e8" stroke-width="0.9"/>
<!-- icon 4 : list -->
<g fill="#000"><rect x="1467" y="285" width="3" height="2.5"/><rect x="1467" y="290.5" width="3" height="2.5"/><rect x="1467" y="296" width="3" height="2.5"/></g>
<g fill="none" stroke="#444" stroke-width="0.8"><rect x="1472.5" y="284.5" width="14" height="3.5"/><rect x="1472.5" y="290" width="14" height="3.5"/><rect x="1472.5" y="295.5" width="14" height="3.5"/></g>
<!-- icon 5 : funnel -->
<path d="M1469.5 331 L1484.5 331 L1479 338 L1479 345 L1475 343 L1475 338 Z" fill="#d8d8d8" stroke="#555" stroke-width="0.9"/>
<!-- icon 6 : plug/camera -->
<path d="M1469 375 L1469 389 L1474 385 L1474 379 Z" fill="#fff" stroke="#333" stroke-width="0.9"/>
<rect x="1474" y="379" width="9" height="6" rx="1" fill="#bbb" stroke="#555" stroke-width="0.7"/>
<path d="M1466 382 L1488 382" stroke="#f08080" stroke-width="0.7" stroke-dasharray="1.5 1"/>
<!-- icon 7 : command text -->
<g fill="#9a9a9a"><rect x="1465.5" y="432.5" width="12" height="1"/><rect x="1465.5" y="435.8" width="10" height="1"/><rect x="1465.5" y="439" width="13" height="1"/><rect x="1465.5" y="442.3" width="13" height="1"/><rect x="1465.5" y="448.6" width="2" height="1.2"/><rect x="1472" y="448.6" width="16" height="1.2"/></g>
<rect x="1463.5" y="446.5" width="27" height="0.9" fill="#333"/>
<!-- icon 8 : clipboard -->
<rect x="1470.6" y="480" width="12.2" height="14" rx="1" fill="#c68c34" stroke="#8a6020" stroke-width="0.6"/>
<rect x="1471.8" y="481.3" width="9.8" height="11.6" fill="#ececec"/>
<rect x="1473.5" y="479.3" width="6.5" height="2.6" rx="0.8" fill="#9a9a92"/>
<g fill="#c8c8c8"><rect x="1473" y="484.5" width="7" height="0.8"/><rect x="1473" y="486.5" width="7" height="0.8"/><rect x="1473" y="488.5" width="6" height="0.8"/></g>
<path d="M1465 533.3 L1471 533.3 Q1474.6 533.3 1474.6 537.3 Q1474.6 541.3 1471 541.3 L1467.1 541.3 M1471 541.3 Q1474.6 541.3 1474.6 545.4 Q1474.6 549.4 1471 549.4 L1465 549.4 M1478.7 532.5 L1478.7 549.4 L1484 549.4 Q1489.5 549.4 1489.5 544 L1489.5 538 Q1489.5 532.5 1484 532.5 Z" fill="none" stroke="#111" stroke-width="1.45" stroke-linecap="round" stroke-linejoin="round"/>
</svg>

<!-- STATUS -->
<div class="a" style="left:0;top:797px;width:1500px;height:47px;background:#dbdbdb;border-top:1px solid #cdcdcd"></div>

<!-- TOOLBAR2 CONTENT -->
<svg class="a" style="left:0;top:68px" width="120" height="40" viewBox="0 68 120 40">
<defs><linearGradient id="b2g" x1="0" y1="0" x2="0" y2="1"><stop offset="0" stop-color="#f8f8f8"/><stop offset="0.45" stop-color="#e8e8e8"/><stop offset="0.55" stop-color="#f2f2f2"/><stop offset="1" stop-color="#ececec"/></linearGradient>
<pattern id="vd2" x="0" y="71" width="1" height="3" patternUnits="userSpaceOnUse"><rect width="1" height="1" fill="#505050"/></pattern></defs>
<g fill="#8a8a8a"><rect x="7" y="77" width="2" height="2"/><rect x="7" y="83" width="2" height="2"/><rect x="7" y="89" width="2" height="2"/><rect x="7" y="95" width="2" height="2"/></g>
<rect x="67" y="71" width="1" height="35" fill="url(#vd2)"/>
<rect x="15" y="73" width="43" height="31" rx="5" fill="url(#b2g)" stroke="#8e8e8e" stroke-width="1.6"/>
<path d="M31.3 79.5 L31.3 93.5 L34.5 90.6 L37.3 96.8 L39.3 95.8 L36.6 89.7 L40.8 89.5 Z" fill="#fff" stroke="#444" stroke-width="0.9" stroke-linejoin="round"/>
</svg>
<!-- doc title icon -->
<svg class="a" style="left:94px;top:111px" width="16" height="16" viewBox="0 0 16 16">
<circle cx="8" cy="7.8" r="5.8" fill="#f4f4f4" stroke="#24408a" stroke-width="1.8"/>
<path d="M5 6 L11 6 M5 9 L11 9 M8 4 L8 11" stroke="#c8a0a0" stroke-width="0.6"/>
<path d="M8.5 8.5 L13 13" stroke="#f0a020" stroke-width="2"/>
<circle cx="13.3" cy="13.3" r="1" fill="#e06060"/>
</svg>
<!-- command button icon -->
<svg class="a" style="left:1127px;top:772px" width="26" height="26" viewBox="0 0 26 26">
<rect x="7.5" y="9.5" width="13" height="9" fill="#f0f0f0" stroke="#333" stroke-width="1"/>
<rect x="7" y="9" width="14" height="3" fill="#111"/>
</svg>
<!-- STATUS CONTENT -->
<div class="st" style="left:2px;top:807px">210.6667,-48.6667</div>
<div class="st" style="left:2px;top:828px">@210.6667,-48.6667</div>
<div class="a" style="left:253px;top:802px;width:1px;height:40px;background:#6a6a6a"></div><div class="a" style="left:254px;top:802px;width:1px;height:40px;background:#fafafa"></div>
<div class="st" style="left:256px;top:807px">216.2149&lt;347°</div>
<div class="st" style="left:256px;top:828px">@216.2149&lt;347°</div>
<div class="st" style="left:400px;width:299px;top:811px;text-align:right;letter-spacing:0.05px">Element oder Bereich selektieren</div>
<div class="st" style="left:400px;width:299px;top:822px;text-align:right;letter-spacing:0.05px">Element oder Referenzpunkt verschieben</div>
<div class="a" style="left:506px;top:818px;width:6px;height:6px;border-radius:3px;background:#c4c4c4"></div>
<div class="a" style="left:940px;top:818px;width:6px;height:6px;border-radius:3px;background:#c4c4c4"></div>
<div class="a" style="left:1269px;top:818px;width:6px;height:6px;border-radius:3px;background:#c4c4c4"></div>
<svg class="a" style="left:716px;top:805px" width="22" height="32" viewBox="0 0 22 32">
<rect x="2.5" y="1.5" width="17" height="29" rx="8.5" fill="#fff" stroke="#333" stroke-width="1"/>
<path d="M2.8 13 Q11 10 19.2 13" fill="none" stroke="#333" stroke-width="1"/>
<path d="M11 1.5 L11 11.5" stroke="#333" stroke-width="0.8"/>
<rect x="9.2" y="3.5" width="3.6" height="7" rx="1.8" fill="#fff" stroke="#333" stroke-width="0.9"/>
</svg>
<div class="st" style="left:949px;top:811px">Selektierte Objekte:</div>
<div class="st" style="left:949px;top:822px">1 Bild auf Layer "Bild".</div>
<!-- MENU DROPDOWN -->
<div class="a menu">
<span class="it" style="top:5px">Punkt</span><span class="arr" style="top:9.5px"></span>
<span class="it" style="top:24px">Linie</span><span class="arr" style="top:28.5px"></span>
<span class="it" style="top:43px">Bogen</span><span class="arr" style="top:47.5px"></span>
<span class="it" style="top:62px">Kreis</span><span class="arr" style="top:66.5px"></span>
<span class="it" style="top:81px">Ellipse</span><span class="arr" style="top:85.5px"></span>
<span class="it" style="top:100px">Spline</span><span class="arr" style="top:104.5px"></span>
<span class="it" style="top:119px">Polylinie</span><span class="arr" style="top:123.5px"></span>
<span class="it" style="top:138px">Form</span><span class="arr" style="top:142.5px"></span>
<span class="it" style="top:157px">Schraffur</span><span class="arr" style="top:161.5px"></span>
<span class="it" style="top:176px">Ansichtsfenster</span><span class="arr" style="top:180.5px"></span>
<span class="it" style="top:195px">Ring (RI)</span>
<span class="it" style="top:214px">Abdeckung (WP)</span>
<div class="a" style="left:0;top:237px;width:205px;height:2px;background:#d6d6d6"></div>
<span class="it" style="top:245px">Text… (TE)</span>
<span class="it" style="top:264px">Bitmap einfügen… (IM)</span>
<span class="it" style="top:283px">Bitmap nachzeichnen…</span>
</div>
<!-- red annotation highlights -->
<div class="a" style="left:265px;top:0;width:71px;height:21px;background:rgba(230,60,60,0.2)"></div>
<div class="a" style="left:256px;top:20px;width:89px;height:2px;background:linear-gradient(90deg,rgba(240,80,80,0),rgba(240,80,80,.75) 10%,rgba(240,80,80,.75) 90%,rgba(240,80,80,0))"></div>
<div class="a" style="left:256px;top:-1px;width:89px;height:2px;background:linear-gradient(90deg,rgba(240,80,80,0),rgba(240,80,80,.75) 10%,rgba(240,80,80,.75) 90%,rgba(240,80,80,0))"></div>
<div class="a" style="left:264px;top:0;width:2px;height:30px;background:linear-gradient(rgba(240,80,80,.75) 70%,rgba(240,80,80,0))"></div>
<div class="a" style="left:335px;top:0;width:2px;height:30px;background:linear-gradient(rgba(240,80,80,.75) 70%,rgba(240,80,80,0))"></div>

<div class="a" style="left:265px;top:306px;width:205px;height:19px;background:rgba(230,60,60,0.2)"></div>
<div class="a" style="left:256px;top:305px;width:223px;height:2px;background:linear-gradient(90deg,rgba(240,80,80,0),rgba(240,80,80,.75) 4%,rgba(240,80,80,.75) 96%,rgba(240,80,80,0))"></div>
<div class="a" style="left:256px;top:324px;width:223px;height:2px;background:linear-gradient(90deg,rgba(240,80,80,0),rgba(240,80,80,.75) 4%,rgba(240,80,80,.75) 96%,rgba(240,80,80,0))"></div>
<div class="a" style="left:264px;top:296px;width:2px;height:38px;background:linear-gradient(rgba(240,80,80,0),rgba(240,80,80,.75) 25%,rgba(240,80,80,.75) 75%,rgba(240,80,80,0))"></div>
<div class="a" style="left:469px;top:296px;width:2px;height:38px;background:linear-gradient(rgba(240,80,80,0),rgba(240,80,80,.75) 25%,rgba(240,80,80,.75) 75%,rgba(240,80,80,0))"></div>

</body></html>
